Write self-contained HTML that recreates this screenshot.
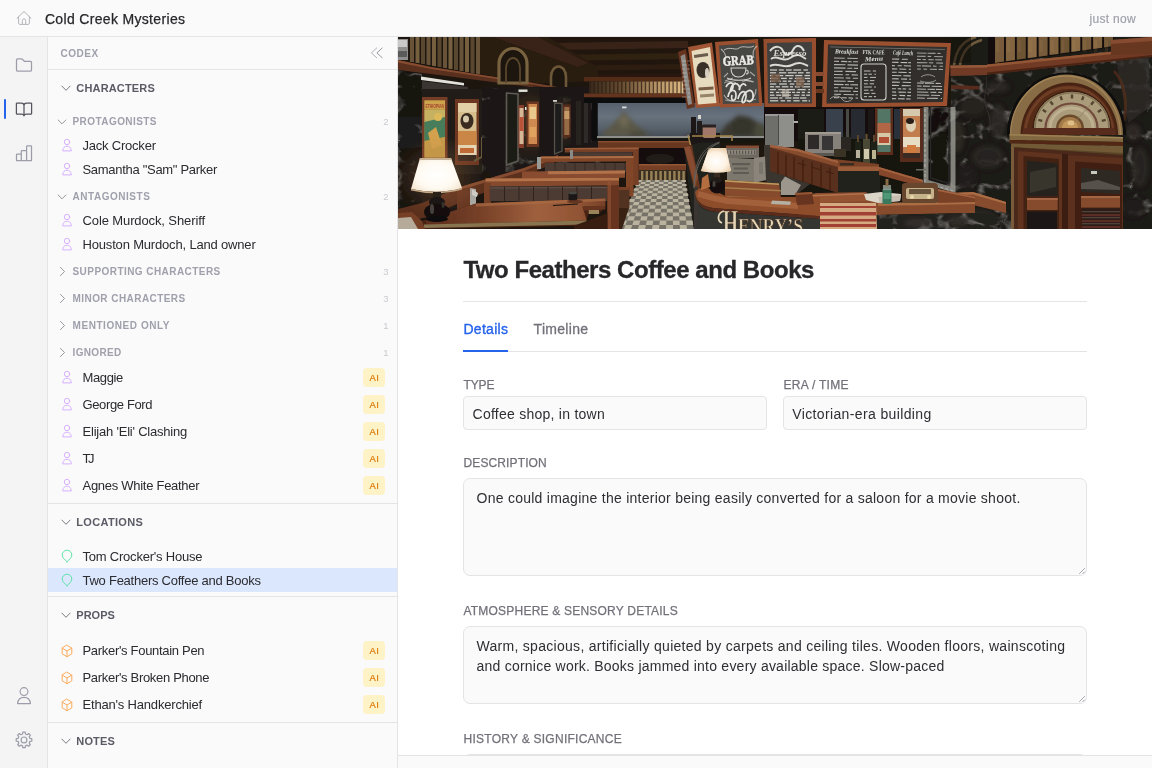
<!DOCTYPE html>
<html lang="en">
<head>
<meta charset="utf-8">
<title>Cold Creek Mysteries</title>
<style>
*{box-sizing:border-box;margin:0;padding:0}
html,body{width:1152px;height:768px;overflow:hidden;background:#fff}
body{font-family:"Liberation Sans",sans-serif;color:#27272a;position:relative}
.abs{position:absolute}
#top{left:0;top:0;width:1152px;height:37px;background:#fafafa;border-bottom:1px solid #e4e4e7}
#rail{left:0;top:37px;width:48px;height:731px;background:#f4f4f5;border-right:1px solid #e4e4e7}
#side{left:48px;top:37px;width:350px;height:731px;background:#fafafa;border-right:1px solid #e4e4e7}
#main{left:398px;top:37px;width:754px;height:718px;background:#fff}
#foot{left:398px;top:755px;width:754px;height:13px;background:#fafafa;border-top:1px solid #e4e4e7}
.t{position:absolute;white-space:nowrap}
#icons{left:0;top:0;pointer-events:none}
#app{position:absolute;left:0;top:0;width:1152px;height:768px;will-change:transform}
</style>
</head>
<body>
<div id="app">
<div id="top" class="abs"></div>
<div class="t" style="left:44.90px;top:12.15px;font-size:14px;line-height:14px;color:#27272a;letter-spacing:0.331px;-webkit-text-stroke:0.25px #27272a;">Cold Creek Mysteries</div>
<div class="t" style="left:1089.61px;top:12.84px;font-size:12px;line-height:12px;color:#a1a1ae;letter-spacing:0.295px;-webkit-text-stroke:0.2px #a1a1ae;">just now</div>
<div id="rail" class="abs"></div>
<div class="abs" style="left:4px;top:99px;width:2px;height:20px;border-radius:1px;background:#2563eb"></div>
<div id="side" class="abs"></div>
<div class="abs" style="left:48px;top:69px;width:349px;height:1px;background:#e4e4e7"></div>
<div class="t" style="left:60.40px;top:48.53px;font-size:10px;line-height:10px;font-weight:700;color:#a0a0ad;letter-spacing:0.534px;">CODEX</div>
<div class="t" style="left:76.30px;top:82.69px;font-size:11px;line-height:11px;font-weight:700;color:#5b5b66;letter-spacing:0.167px;">CHARACTERS</div>
<div class="t" style="left:72.50px;top:116.53px;font-size:10px;line-height:10px;font-weight:700;color:#a0a0ad;letter-spacing:0.432px;">PROTAGONISTS</div>
<div class="t" style="left:383.19px;top:116.76px;font-size:9.5px;line-height:9.5px;color:#c9c9d0;">2</div>
<div class="t" style="left:82.50px;top:139.00px;font-size:13px;line-height:13px;color:#2b2b30;letter-spacing:-0.216px;">Jack Crocker</div>
<div class="t" style="left:82.50px;top:163.00px;font-size:13px;line-height:13px;color:#2b2b30;letter-spacing:-0.297px;">Samantha "Sam" Parker</div>
<div class="t" style="left:72.50px;top:191.53px;font-size:10px;line-height:10px;font-weight:700;color:#a0a0ad;letter-spacing:0.534px;">ANTAGONISTS</div>
<div class="t" style="left:383.19px;top:191.76px;font-size:9.5px;line-height:9.5px;color:#c9c9d0;">2</div>
<div class="t" style="left:82.50px;top:214.00px;font-size:13px;line-height:13px;color:#2b2b30;letter-spacing:-0.111px;">Cole Murdock, Sheriff</div>
<div class="t" style="left:82.50px;top:238.00px;font-size:13px;line-height:13px;color:#2b2b30;letter-spacing:-0.174px;">Houston Murdoch, Land owner</div>
<div class="t" style="left:72.50px;top:266.54px;font-size:10px;line-height:10px;font-weight:700;color:#a0a0ad;letter-spacing:0.441px;">SUPPORTING CHARACTERS</div>
<div class="t" style="left:383.19px;top:266.76px;font-size:9.5px;line-height:9.5px;color:#c9c9d0;">3</div>
<div class="t" style="left:72.50px;top:293.54px;font-size:10px;line-height:10px;font-weight:700;color:#a0a0ad;letter-spacing:0.438px;">MINOR CHARACTERS</div>
<div class="t" style="left:383.19px;top:293.76px;font-size:9.5px;line-height:9.5px;color:#c9c9d0;">3</div>
<div class="t" style="left:72.50px;top:320.54px;font-size:10px;line-height:10px;font-weight:700;color:#a0a0ad;letter-spacing:0.567px;">MENTIONED ONLY</div>
<div class="t" style="left:383.19px;top:320.76px;font-size:9.5px;line-height:9.5px;color:#c9c9d0;">1</div>
<div class="t" style="left:72.50px;top:347.54px;font-size:10px;line-height:10px;font-weight:700;color:#a0a0ad;letter-spacing:0.352px;">IGNORED</div>
<div class="t" style="left:383.19px;top:347.76px;font-size:9.5px;line-height:9.5px;color:#c9c9d0;">1</div>
<div class="t" style="left:82.50px;top:371.00px;font-size:13px;line-height:13px;color:#2b2b30;letter-spacing:-0.365px;">Maggie</div>
<div class="abs" style="left:363px;top:368px;width:22px;height:19px;border-radius:4px;background:#fef3c7"></div>
<div class="t" style="left:369.50px;top:373.06px;font-size:9.5px;line-height:9.5px;color:#d97706;letter-spacing:0.500px;-webkit-text-stroke:0.2px #d97706;">AI</div>
<div class="t" style="left:82.50px;top:398.00px;font-size:13px;line-height:13px;color:#2b2b30;letter-spacing:-0.369px;">George Ford</div>
<div class="abs" style="left:363px;top:395px;width:22px;height:19px;border-radius:4px;background:#fef3c7"></div>
<div class="t" style="left:369.50px;top:400.06px;font-size:9.5px;line-height:9.5px;color:#d97706;letter-spacing:0.500px;-webkit-text-stroke:0.2px #d97706;">AI</div>
<div class="t" style="left:82.50px;top:425.00px;font-size:13px;line-height:13px;color:#2b2b30;letter-spacing:-0.215px;">Elijah 'Eli' Clashing</div>
<div class="abs" style="left:363px;top:422px;width:22px;height:19px;border-radius:4px;background:#fef3c7"></div>
<div class="t" style="left:369.50px;top:427.06px;font-size:9.5px;line-height:9.5px;color:#d97706;letter-spacing:0.500px;-webkit-text-stroke:0.2px #d97706;">AI</div>
<div class="t" style="left:82.50px;top:452.00px;font-size:13px;line-height:13px;color:#2b2b30;letter-spacing:-2.438px;">TJ</div>
<div class="abs" style="left:363px;top:449px;width:22px;height:19px;border-radius:4px;background:#fef3c7"></div>
<div class="t" style="left:369.50px;top:454.06px;font-size:9.5px;line-height:9.5px;color:#d97706;letter-spacing:0.500px;-webkit-text-stroke:0.2px #d97706;">AI</div>
<div class="t" style="left:82.50px;top:479.00px;font-size:13px;line-height:13px;color:#2b2b30;letter-spacing:-0.279px;">Agnes White Feather</div>
<div class="abs" style="left:363px;top:476px;width:22px;height:19px;border-radius:4px;background:#fef3c7"></div>
<div class="t" style="left:369.50px;top:481.06px;font-size:9.5px;line-height:9.5px;color:#d97706;letter-spacing:0.500px;-webkit-text-stroke:0.2px #d97706;">AI</div>
<div class="abs" style="left:48px;top:503px;width:349px;height:1px;background:#e4e4e7"></div>
<div class="t" style="left:76.30px;top:516.69px;font-size:11px;line-height:11px;font-weight:700;color:#5b5b66;letter-spacing:0.320px;">LOCATIONS</div>
<div class="t" style="left:82.50px;top:550.00px;font-size:13px;line-height:13px;color:#2b2b30;letter-spacing:-0.215px;">Tom Crocker's House</div>
<div class="abs" style="left:48px;top:568px;width:349px;height:24px;background:#dbe7fc"></div>
<div class="t" style="left:82.50px;top:574.00px;font-size:13px;line-height:13px;color:#2b2b30;letter-spacing:-0.250px;">Two Feathers Coffee and Books</div>
<div class="abs" style="left:48px;top:596px;width:349px;height:1px;background:#e4e4e7"></div>
<div class="t" style="left:76.30px;top:609.69px;font-size:11px;line-height:11px;font-weight:700;color:#5b5b66;">PROPS</div>
<div class="t" style="left:82.50px;top:644.00px;font-size:13px;line-height:13px;color:#2b2b30;letter-spacing:-0.308px;">Parker's Fountain Pen</div>
<div class="abs" style="left:363px;top:641px;width:22px;height:19px;border-radius:4px;background:#fef3c7"></div>
<div class="t" style="left:369.50px;top:646.06px;font-size:9.5px;line-height:9.5px;color:#d97706;letter-spacing:0.500px;-webkit-text-stroke:0.2px #d97706;">AI</div>
<div class="t" style="left:82.50px;top:671.00px;font-size:13px;line-height:13px;color:#2b2b30;letter-spacing:-0.316px;">Parker's Broken Phone</div>
<div class="abs" style="left:363px;top:668px;width:22px;height:19px;border-radius:4px;background:#fef3c7"></div>
<div class="t" style="left:369.50px;top:673.06px;font-size:9.5px;line-height:9.5px;color:#d97706;letter-spacing:0.500px;-webkit-text-stroke:0.2px #d97706;">AI</div>
<div class="t" style="left:82.50px;top:698.00px;font-size:13px;line-height:13px;color:#2b2b30;letter-spacing:-0.187px;">Ethan's Handkerchief</div>
<div class="abs" style="left:363px;top:695px;width:22px;height:19px;border-radius:4px;background:#fef3c7"></div>
<div class="t" style="left:369.50px;top:700.06px;font-size:9.5px;line-height:9.5px;color:#d97706;letter-spacing:0.500px;-webkit-text-stroke:0.2px #d97706;">AI</div>
<div class="abs" style="left:48px;top:722px;width:349px;height:1px;background:#e4e4e7"></div>
<div class="t" style="left:76.30px;top:735.69px;font-size:11px;line-height:11px;font-weight:700;color:#5b5b66;letter-spacing:0.156px;">NOTES</div>
<div id="main" class="abs"></div>
<svg class="abs" style="left:398px;top:37px" width="754" height="192" viewBox="0 0 754 192" ><defs><filter id="b1" x="-2%" y="-5%" width="104%" height="110%"><feGaussianBlur stdDeviation="0.6"/><feColorMatrix type="saturate" values="0.88"/></filter><filter id="b2" x="-20%" y="-20%" width="140%" height="140%"><feGaussianBlur stdDeviation="2.2"/></filter><filter id="mar" x="0" y="0" width="100%" height="100%"><feTurbulence type="turbulence" baseFrequency="0.03 0.04" numOctaves="3" seed="4" result="n"/><feColorMatrix in="n" type="matrix" values="0 0 0 0 0.37  0 0 0 0 0.355  0 0 0 0 0.33  -4.2 0 0 0 0.8" result="c"/><feComposite in="c" in2="SourceGraphic" operator="in"/></filter><filter id="b3" x="-20%" y="-20%" width="140%" height="140%"><feGaussianBlur stdDeviation="3"/></filter></defs><g filter="url(#b1)"><rect x="0" y="0" width="754" height="192" fill="#1a1511" />
<polygon points="80,0 300,0 300,44 200,44 135,47 82,36" fill="#24160c" />
<polygon points="150,6 290,4 290,11 150,13" fill="#3a2416" />
<polygon points="150,18 290,16 290,22 150,24" fill="#33200f" />
<polygon points="150,29 290,27 290,32 150,34" fill="#2f1d10" />
<polygon points="150,38 290,36 290,40 150,42" fill="#2a190d" />
<polygon points="82,0 150,0 200,30 200,44 135,47 82,37" fill="#2c1a0e" />
<polygon points="95,0 140,0 190,26 180,30" fill="#3b2314" />
<polygon points="10,0 82,0 82,37 10,24" fill="#1e160e" />
<polygon points="12.0,0 16.0,0 16.0,25.36 12.0,24.86" fill="#6a5232" />
<polygon points="17.5,0 21.5,0 21.5,26.35 17.5,25.85" fill="#785e38" />
<polygon points="23.0,0 27.0,0 27.0,27.34 23.0,26.84" fill="#5c472b" />
<polygon points="28.5,0 32.5,0 32.5,28.33 28.5,27.83" fill="#6a5232" />
<polygon points="34.0,0 38.0,0 38.0,29.32 34.0,28.82" fill="#785e38" />
<polygon points="39.5,0 43.5,0 43.5,30.31 39.5,29.81" fill="#5c472b" />
<polygon points="45.0,0 49.0,0 49.0,31.3 45.0,30.8" fill="#6a5232" />
<polygon points="50.5,0 54.5,0 54.5,32.29 50.5,31.79" fill="#785e38" />
<polygon points="56.0,0 60.0,0 60.0,33.28 56.0,32.78" fill="#5c472b" />
<polygon points="61.5,0 65.5,0 65.5,34.269999999999996 61.5,33.769999999999996" fill="#6a5232" />
<polygon points="67.0,0 71.0,0 71.0,35.26 67.0,34.76" fill="#785e38" />
<polygon points="72.5,0 76.5,0 76.5,36.25 72.5,35.75" fill="#5c472b" />
<polygon points="78.0,0 82.0,0 82.0,37.24 78.0,36.74" fill="#6a5232" />
<rect x="0" y="2" width="10" height="21" fill="#8e8e8c" />
<rect x="0" y="3" width="9" height="7" fill="#c9c9c9" />
<rect x="0" y="14" width="9" height="6" fill="#5a5a5a" />
<polygon points="0,23 33,30 135,46 140,51 33,37 0,33" fill="#5c2d17" />
<polygon points="0,23 33,30 135,46 135,47.5 33,32 0,25.5" fill="#8a4a26" />
<polygon points="0,33 24,37 24,172 0,172" fill="#16120e" />
<polygon points="0,80 24,80 24,110 0,112" fill="#1e1d1c" />
<polygon points="0,33 24,37 24,172 0,172" fill="#fff" filter="url(#mar)" opacity="0.7"/>
<polygon points="23,39.5 66,46 66,48.5 23,43" fill="#e2e2da" />
<polygon points="24,44 70,50 70,56 24,52" fill="#3a3630" />
<rect x="24" y="52" width="60" height="85" fill="#241e18" />
<rect x="24" y="60" width="25.5" height="63" fill="#7a3a1c" />
<rect x="26.5" y="63.5" width="20.5" height="57" fill="#a89438" />
<rect x="26.5" y="63.5" width="20.5" height="9" fill="#d3a22e" />
<rect x="26.5" y="73" width="20.5" height="12" fill="#c9b050" />
<polygon points="26.5,85 47,80 47,100 26.5,104" fill="#3f7f58" />
<polygon points="26.5,104 47,100 47,120.5 26.5,120.5" fill="#c99a2c" />
<ellipse cx="40" cy="80" rx="4" ry="4" fill="#e0b83a" />
<text x="36.700" y="70.500" text-anchor="middle" font-family="Liberation Sans,sans-serif" font-weight="700" font-size="4.6" fill="#a8402a" textLength="18.5" lengthAdjust="spacingAndGlyphs">ETHIOPIAN</text>
<polygon points="30,96 38,90 44,108 34,112" fill="#d8a030" />
<rect x="57" y="62" width="24" height="66" fill="#6f3419" />
<rect x="60" y="66" width="18.5" height="58" fill="#d9bd86" />
<rect x="60" y="66" width="18.5" height="9" fill="#e4cf9e" />
<ellipse cx="69" cy="84" rx="6.5" ry="8" fill="#3b2a1e" />
<ellipse cx="68" cy="82" rx="3" ry="3.5" fill="#d8c8a8" />
<rect x="60" y="94" width="18.5" height="14" fill="#cf8432" />
<rect x="60" y="108" width="18.5" height="10" fill="#e6d6b0" />
<rect x="62" y="111" width="14" height="5" fill="#c8661e" />
<rect x="60" y="118" width="18.5" height="6" fill="#3a2a1e" />
<path d="M84 100V120L76 124" fill="none" stroke="#6a5630" stroke-width="2" />
<path d="M101 46V27A14 15.5 0 0 1 129 27V46Z" fill="#1c130c" stroke="#7a6238" stroke-width="3.2" />
<path d="M108 46V31A7 10 0 0 1 122 31V46" fill="none" stroke="#5b4728" stroke-width="1.8" />
<path d="M153 52V40A7.500 10.500 0 0 1 168 40V52Z" fill="#1a120b" stroke="#6e5732" stroke-width="2.6" />
<polygon points="135,46 200,57 290,57 290,62 200,62 135,51" fill="#4a2412" />
<polygon points="135,46 172,52 172,54 135,48" fill="#7a4020" />
<rect x="84" y="50" width="120" height="85" fill="#1d1915" />
<polygon points="84,50 204,62 204,135 84,135" fill="#fff" filter="url(#mar)" opacity="0.6"/>
<radialGradient id="wl"><stop offset="0" stop-color="#6a4424" stop-opacity=".55"/><stop offset="1" stop-color="#6a4424" stop-opacity="0"/></radialGradient>
<ellipse cx="132" cy="86" rx="30" ry="38" fill="url(#wl)" />
<ellipse cx="166" cy="84" rx="16" ry="26" fill="url(#wl)" />
<rect x="92" y="52" width="15.5" height="90" fill="#1a1612" />
<path d="M108.500 56L120 57V124L108.500 128Z" fill="#1d1b18" stroke="#5e5a52" stroke-width="1.6" />
<rect x="120.5" y="52.5" width="9" height="2.4" fill="#e4e4dc" />
<rect x="120.5" y="68" width="5.5" height="43" fill="#8a3a24" />
<rect x="121.5" y="71" width="4" height="36" fill="#d8b890" />
<rect x="121.5" y="80" width="4" height="14" fill="#c0502c" />
<rect x="128.5" y="64.5" width="12.5" height="45.5" fill="#6f3419" />
<rect x="130.5" y="67" width="8.5" height="40" fill="#d4883c" />
<rect x="131.5" y="70" width="6.5" height="12" fill="#ecc880" />
<rect x="131.5" y="90" width="6.5" height="10" fill="#e6a04c" />
<rect x="127" y="70" width="1.5" height="3" fill="#e8e8e0" />
<rect x="141.5" y="52" width="14.5" height="78" fill="#1b1713" />
<path d="M156.500 66L164 66.500V114L156.500 117Z" fill="#1f1d1a" stroke="#56524a" stroke-width="1.3" />
<rect x="165" y="67.5" width="7.5" height="33" fill="#5a2a14" />
<rect x="166.3" y="70" width="5" height="28" fill="#9a6a3c" />
<rect x="166.3" y="74" width="5" height="8" fill="#c89a5c" />
<rect x="155" y="63" width="4" height="1.8" fill="#d0d0c8" />
<rect x="173" y="56" width="20" height="55" fill="#1a1713" />
<rect x="178" y="64" width="5" height="44" fill="#26231f" />
<rect x="186" y="66" width="4" height="40" fill="#2e2b26" />
<rect x="193.5" y="62" width="5.5" height="42" fill="#0c0a08" />
<linearGradient id="slat" x1="0" x2="1"><stop offset="0" stop-color="#3a2818"/><stop offset=".35" stop-color="#6a4c2c"/><stop offset=".7" stop-color="#b8905a"/><stop offset="1" stop-color="#e2b878"/></linearGradient>
<rect x="186" y="40" width="104" height="4.5" fill="#55290f" />
<rect x="191" y="44.5" width="94.5" height="12" fill="url(#slat)" />
<rect x="191.5" y="44.5" width="1.3" height="12" fill="#2a1b0e" opacity=".7"/>
<rect x="195.45" y="44.5" width="1.3" height="12" fill="#2a1b0e" opacity=".7"/>
<rect x="199.4" y="44.5" width="1.3" height="12" fill="#2a1b0e" opacity=".7"/>
<rect x="203.35" y="44.5" width="1.3" height="12" fill="#2a1b0e" opacity=".7"/>
<rect x="207.3" y="44.5" width="1.3" height="12" fill="#2a1b0e" opacity=".7"/>
<rect x="211.25" y="44.5" width="1.3" height="12" fill="#2a1b0e" opacity=".7"/>
<rect x="215.2" y="44.5" width="1.3" height="12" fill="#2a1b0e" opacity=".7"/>
<rect x="219.15" y="44.5" width="1.3" height="12" fill="#2a1b0e" opacity=".7"/>
<rect x="223.1" y="44.5" width="1.3" height="12" fill="#2a1b0e" opacity=".7"/>
<rect x="227.05" y="44.5" width="1.3" height="12" fill="#2a1b0e" opacity=".7"/>
<rect x="231.0" y="44.5" width="1.3" height="12" fill="#2a1b0e" opacity=".7"/>
<rect x="234.95" y="44.5" width="1.3" height="12" fill="#2a1b0e" opacity=".7"/>
<rect x="238.9" y="44.5" width="1.3" height="12" fill="#2a1b0e" opacity=".7"/>
<rect x="242.85" y="44.5" width="1.3" height="12" fill="#2a1b0e" opacity=".7"/>
<rect x="246.8" y="44.5" width="1.3" height="12" fill="#2a1b0e" opacity=".7"/>
<rect x="250.75" y="44.5" width="1.3" height="12" fill="#2a1b0e" opacity=".7"/>
<rect x="254.7" y="44.5" width="1.3" height="12" fill="#2a1b0e" opacity=".7"/>
<rect x="258.65" y="44.5" width="1.3" height="12" fill="#2a1b0e" opacity=".7"/>
<rect x="262.6" y="44.5" width="1.3" height="12" fill="#2a1b0e" opacity=".7"/>
<rect x="266.55" y="44.5" width="1.3" height="12" fill="#2a1b0e" opacity=".7"/>
<rect x="270.5" y="44.5" width="1.3" height="12" fill="#2a1b0e" opacity=".7"/>
<rect x="274.45" y="44.5" width="1.3" height="12" fill="#2a1b0e" opacity=".7"/>
<rect x="278.4" y="44.5" width="1.3" height="12" fill="#2a1b0e" opacity=".7"/>
<rect x="282.35" y="44.5" width="1.3" height="12" fill="#2a1b0e" opacity=".7"/>
<rect x="186" y="56.5" width="104" height="4" fill="#693318" />
<rect x="186" y="60.5" width="106" height="5.5" fill="#100c09" />
<linearGradient id="win" x1="0" y1="0" x2="0" y2="1"><stop offset="0" stop-color="#56616f"/><stop offset=".4" stop-color="#66727f"/><stop offset=".75" stop-color="#56606b"/><stop offset="1" stop-color="#444c55"/></linearGradient>
<rect x="199" y="66" width="167" height="34" fill="url(#win)" />
<g filter="url(#b2)">
<polygon points="226,74 236,86 252,99 202,99 214,88" fill="#5c5845" />
<ellipse cx="226" cy="84" rx="5" ry="6" fill="#6e6850" />
<ellipse cx="240" cy="97" rx="9" ry="4" fill="#4e4b3b" />
<polygon points="340,78 352,80 360,86 366,100 320,100 328,88" fill="#3a392e" />
<ellipse cx="344" cy="90" rx="10" ry="8" fill="#34342b" />
<ellipse cx="362" cy="94" rx="6" ry="8" fill="#4a4838" />
<ellipse cx="300" cy="99" rx="16" ry="3" fill="#444a52" />
</g>
<rect x="224" y="69.5" width="4.5" height="1.8" fill="#dcdcdc" />
<path d="M199 66V100" fill="none" stroke="#0e0c0a" stroke-width="1.5" />
<rect x="199" y="99" width="167" height="2.2" fill="#8e8e8a" />
<rect x="199" y="101.2" width="167" height="4" fill="#181411" />
<polygon points="280,15 288,12 297,70 289,72" fill="#6a3018" />
<polygon points="282.5,19 287,17 294,67 290,68" fill="#8d8a84" />
<polygon points="290,10 314,5.5 322,69 298,71" fill="#a65226" />
<polygon points="293.5,14 312,10 318.5,66 300,67.5" fill="#e7dabb" />
<ellipse cx="305" cy="33" rx="6.5" ry="8" fill="#3a3028" />
<ellipse cx="309" cy="36" rx="2" ry="5" fill="#d8d0c0" />
<rect x="300.5" y="50" width="15" height="3" fill="#7a5a3c" transform="rotate(-4 308 51)"/>
<rect x="302" y="57" width="14" height="3" fill="#9a8262" transform="rotate(-4 308 58)"/>
<rect x="296" y="17" width="14" height="3" fill="#6a5a48" transform="rotate(-8 303 18)"/>
<polygon points="317,5 360,2 364.5,69 322,70.5" fill="#a04e24" />
<polygon points="321,8.5 357,6 361,66 325,67" fill="#474643" />
<polygon points="365.5,2 418,1 418,70 366.5,70" fill="#9c4c23" />
<polygon points="369,6 414,5 414,66.5 370,66.5" fill="#42403c" />
<polygon points="426,3 553,6 549,69 424,70.5" fill="#a04e24" />
<polygon points="430,7.5 549,10 545,65 428.5,66.5" fill="#302f2c" />
<rect x="418" y="35" width="8" height="4" fill="#8a4a26" />
<rect x="418" y="45" width="8" height="4" fill="#8a4a26" />
<rect x="418" y="52" width="8" height="4" fill="#6a3418" />
<line x1="284" y1="24.0" x2="288.0" y2="24.0" stroke="#ecebe4" stroke-width="1.1" opacity="0.35"/>
<line x1="289.3" y1="24.0" x2="292.0" y2="24.0" stroke="#ecebe4" stroke-width="1.1" opacity="0.35"/>
<line x1="284" y1="28.0" x2="288.6" y2="28.0" stroke="#ecebe4" stroke-width="1.1" opacity="0.35"/>
<line x1="290.3" y1="28.0" x2="292.0" y2="28.0" stroke="#ecebe4" stroke-width="1.1" opacity="0.35"/>
<line x1="284" y1="32.0" x2="287.1" y2="32.0" stroke="#ecebe4" stroke-width="1.1" opacity="0.35"/>
<line x1="289.0" y1="32.0" x2="292.0" y2="32.0" stroke="#ecebe4" stroke-width="1.1" opacity="0.35"/>
<line x1="284" y1="36.0" x2="288.3" y2="36.0" stroke="#ecebe4" stroke-width="1.1" opacity="0.35"/>
<line x1="290.9" y1="36.0" x2="292.0" y2="36.0" stroke="#ecebe4" stroke-width="1.1" opacity="0.35"/>
<line x1="284" y1="40.0" x2="288.9" y2="40.0" stroke="#ecebe4" stroke-width="1.1" opacity="0.35"/>
<line x1="284" y1="44.0" x2="288.7" y2="44.0" stroke="#ecebe4" stroke-width="1.1" opacity="0.35"/>
<line x1="290.5" y1="44.0" x2="292.0" y2="44.0" stroke="#ecebe4" stroke-width="1.1" opacity="0.35"/>
<line x1="284" y1="48.0" x2="289.6" y2="48.0" stroke="#ecebe4" stroke-width="1.1" opacity="0.35"/>
<line x1="284" y1="52.0" x2="287.4" y2="52.0" stroke="#ecebe4" stroke-width="1.1" opacity="0.35"/>
<line x1="288.7" y1="52.0" x2="292.0" y2="52.0" stroke="#ecebe4" stroke-width="1.1" opacity="0.35"/>
<line x1="284" y1="56.0" x2="287.5" y2="56.0" stroke="#ecebe4" stroke-width="1.1" opacity="0.35"/>
<line x1="289.7" y1="56.0" x2="292.0" y2="56.0" stroke="#ecebe4" stroke-width="1.1" opacity="0.35"/>
<line x1="284" y1="60.0" x2="288.6" y2="60.0" stroke="#ecebe4" stroke-width="1.1" opacity="0.35"/>
<line x1="289.8" y1="60.0" x2="292.0" y2="60.0" stroke="#ecebe4" stroke-width="1.1" opacity="0.35"/>
<text x="340.5" y="28" text-anchor="middle" font-family="Liberation Serif,serif" font-weight="700" font-size="13.5" fill="#ecebe4" stroke="#ecebe4" stroke-width=".5" transform="rotate(-3 340 28)" textLength="31" lengthAdjust="spacingAndGlyphs">GRAB</text>
<path d="M326 13C332 9 338 14 341 11C345 8 351 12 356 9" fill="none" stroke="#ecebe4" stroke-width="1" opacity=".7"/>
<path d="M333 31h15c0 6-3 9-7.500 9s-7.500-3-7.500-9Z M348 33c3 0 3 4 0 4 M329 41c6 3 18 3 24 0" fill="none" stroke="#ecebe4" stroke-width="1.1" opacity=".85"/>
<path d="M328 50c3-6 8-5 7 0s-4 6-2 1 6-6 8-2-1 5 1 1 5-4 6-1 M330 60c1-8 8-9 8-2s-6 7-4 0 M340 62c2-9 9-10 8-2s-6 7-3 0 9-9 10-3-3 10-6 6" fill="none" stroke="#ecebe4" stroke-width="1.7" opacity=".95"/>
<path d="M323 12c4 3 6 8 4 12 M359 9c-4 3-5 8-3 12 M326 58c2 4 6 6 10 6 M358 52c0 5-2 9-6 12 M327 44l8-3 M346 43l9 2 M330 36l-4 4 M352 35l5 4" fill="none" stroke="#ecebe4" stroke-width="1.1" opacity=".6"/>
<path d="M326 46c4-2 8-2 12 0 M344 45c4-2 8-2 12 0 M327 63c8 2 24 2 31-1" fill="none" stroke="#ecebe4" stroke-width="0.9" opacity=".6"/>
<path d="M372 14c5-6 11-5 13 0s7 5 10-1 8-5 11 1 M373 22c6-5 12 4 19-1s10-3 16 1 M372 29c8-4 14 3 22-1s12-1 16 1" fill="none" stroke="#ecebe4" stroke-width="2.0" opacity=".9"/>
<text x="392" y="19" text-anchor="middle" font-family="Liberation Serif,serif" font-style="italic" font-weight="700" font-size="9" fill="#ecebe4" opacity=".9">Espresso</text>
<line x1="372" y1="33" x2="379.1" y2="33.0" stroke="#ecebe4" stroke-width="1.3" opacity="0.8"/>
<line x1="380.9" y1="33.0" x2="385.8" y2="33.0" stroke="#ecebe4" stroke-width="1.3" opacity="0.8"/>
<line x1="388.0" y1="33.0" x2="393.7" y2="33.0" stroke="#ecebe4" stroke-width="1.3" opacity="0.8"/>
<line x1="395.3" y1="33.0" x2="403.1" y2="33.0" stroke="#ecebe4" stroke-width="1.3" opacity="0.8"/>
<line x1="405.5" y1="33.0" x2="409.9" y2="33.0" stroke="#ecebe4" stroke-width="1.3" opacity="0.8"/>
<line x1="372" y1="35.8" x2="378.2" y2="35.8" stroke="#ecebe4" stroke-width="1.3" opacity="0.8"/>
<line x1="380.9" y1="35.8" x2="388.3" y2="35.8" stroke="#ecebe4" stroke-width="1.3" opacity="0.8"/>
<line x1="389.9" y1="35.8" x2="398.7" y2="35.8" stroke="#ecebe4" stroke-width="1.3" opacity="0.8"/>
<line x1="400.0" y1="35.8" x2="405.5" y2="35.8" stroke="#ecebe4" stroke-width="1.3" opacity="0.8"/>
<line x1="408.0" y1="35.8" x2="411.9" y2="35.8" stroke="#ecebe4" stroke-width="1.3" opacity="0.8"/>
<line x1="372" y1="38.6" x2="375.2" y2="38.6" stroke="#ecebe4" stroke-width="1.3" opacity="0.8"/>
<line x1="377.6" y1="38.6" x2="385.2" y2="38.6" stroke="#ecebe4" stroke-width="1.3" opacity="0.8"/>
<line x1="387.3" y1="38.6" x2="395.6" y2="38.6" stroke="#ecebe4" stroke-width="1.3" opacity="0.8"/>
<line x1="397.2" y1="38.6" x2="404.4" y2="38.6" stroke="#ecebe4" stroke-width="1.3" opacity="0.8"/>
<line x1="406.5" y1="38.6" x2="412.0" y2="38.6" stroke="#ecebe4" stroke-width="1.3" opacity="0.8"/>
<line x1="372" y1="41.4" x2="380.0" y2="41.4" stroke="#ecebe4" stroke-width="1.3" opacity="0.8"/>
<line x1="382.9" y1="41.4" x2="388.8" y2="41.4" stroke="#ecebe4" stroke-width="1.3" opacity="0.8"/>
<line x1="391.1" y1="41.4" x2="394.5" y2="41.4" stroke="#ecebe4" stroke-width="1.3" opacity="0.8"/>
<line x1="396.9" y1="41.4" x2="403.8" y2="41.4" stroke="#ecebe4" stroke-width="1.3" opacity="0.8"/>
<line x1="406.7" y1="41.4" x2="412.0" y2="41.4" stroke="#ecebe4" stroke-width="1.3" opacity="0.8"/>
<line x1="372" y1="44.2" x2="377.3" y2="44.2" stroke="#ecebe4" stroke-width="1.3" opacity="0.8"/>
<line x1="379.7" y1="44.2" x2="382.8" y2="44.2" stroke="#ecebe4" stroke-width="1.3" opacity="0.8"/>
<line x1="384.7" y1="44.2" x2="388.7" y2="44.2" stroke="#ecebe4" stroke-width="1.3" opacity="0.8"/>
<line x1="390.0" y1="44.2" x2="393.3" y2="44.2" stroke="#ecebe4" stroke-width="1.3" opacity="0.8"/>
<line x1="395.8" y1="44.2" x2="399.6" y2="44.2" stroke="#ecebe4" stroke-width="1.3" opacity="0.8"/>
<line x1="401.1" y1="44.2" x2="406.5" y2="44.2" stroke="#ecebe4" stroke-width="1.3" opacity="0.8"/>
<line x1="409.2" y1="44.2" x2="412.0" y2="44.2" stroke="#ecebe4" stroke-width="1.3" opacity="0.8"/>
<line x1="372" y1="47.0" x2="378.3" y2="47.0" stroke="#ecebe4" stroke-width="1.3" opacity="0.8"/>
<line x1="381.1" y1="47.0" x2="389.0" y2="47.0" stroke="#ecebe4" stroke-width="1.3" opacity="0.8"/>
<line x1="391.7" y1="47.0" x2="396.4" y2="47.0" stroke="#ecebe4" stroke-width="1.3" opacity="0.8"/>
<line x1="398.2" y1="47.0" x2="403.4" y2="47.0" stroke="#ecebe4" stroke-width="1.3" opacity="0.8"/>
<line x1="406.1" y1="47.0" x2="412.0" y2="47.0" stroke="#ecebe4" stroke-width="1.3" opacity="0.8"/>
<line x1="372" y1="49.8" x2="376.1" y2="49.8" stroke="#ecebe4" stroke-width="1.3" opacity="0.8"/>
<line x1="377.5" y1="49.8" x2="381.9" y2="49.8" stroke="#ecebe4" stroke-width="1.3" opacity="0.8"/>
<line x1="383.9" y1="49.8" x2="390.4" y2="49.8" stroke="#ecebe4" stroke-width="1.3" opacity="0.8"/>
<line x1="392.0" y1="49.8" x2="395.0" y2="49.8" stroke="#ecebe4" stroke-width="1.3" opacity="0.8"/>
<line x1="396.8" y1="49.8" x2="402.0" y2="49.8" stroke="#ecebe4" stroke-width="1.3" opacity="0.8"/>
<line x1="404.2" y1="49.8" x2="412.0" y2="49.8" stroke="#ecebe4" stroke-width="1.3" opacity="0.8"/>
<line x1="372" y1="52.6" x2="378.1" y2="52.6" stroke="#ecebe4" stroke-width="1.3" opacity="0.8"/>
<line x1="380.3" y1="52.6" x2="387.4" y2="52.6" stroke="#ecebe4" stroke-width="1.3" opacity="0.8"/>
<line x1="388.5" y1="52.6" x2="396.9" y2="52.6" stroke="#ecebe4" stroke-width="1.3" opacity="0.8"/>
<line x1="399.5" y1="52.6" x2="407.7" y2="52.6" stroke="#ecebe4" stroke-width="1.3" opacity="0.8"/>
<line x1="410.3" y1="52.6" x2="412.0" y2="52.6" stroke="#ecebe4" stroke-width="1.3" opacity="0.8"/>
<line x1="372" y1="55.4" x2="375.6" y2="55.4" stroke="#ecebe4" stroke-width="1.3" opacity="0.8"/>
<line x1="377.9" y1="55.4" x2="381.3" y2="55.4" stroke="#ecebe4" stroke-width="1.3" opacity="0.8"/>
<line x1="382.4" y1="55.4" x2="386.7" y2="55.4" stroke="#ecebe4" stroke-width="1.3" opacity="0.8"/>
<line x1="388.0" y1="55.4" x2="393.0" y2="55.4" stroke="#ecebe4" stroke-width="1.3" opacity="0.8"/>
<line x1="394.1" y1="55.4" x2="397.1" y2="55.4" stroke="#ecebe4" stroke-width="1.3" opacity="0.8"/>
<line x1="398.4" y1="55.4" x2="402.0" y2="55.4" stroke="#ecebe4" stroke-width="1.3" opacity="0.8"/>
<line x1="403.8" y1="55.4" x2="406.9" y2="55.4" stroke="#ecebe4" stroke-width="1.3" opacity="0.8"/>
<line x1="409.7" y1="55.4" x2="412.0" y2="55.4" stroke="#ecebe4" stroke-width="1.3" opacity="0.8"/>
<line x1="372" y1="58.2" x2="376.5" y2="58.2" stroke="#ecebe4" stroke-width="1.3" opacity="0.8"/>
<line x1="378.2" y1="58.2" x2="383.4" y2="58.2" stroke="#ecebe4" stroke-width="1.3" opacity="0.8"/>
<line x1="384.6" y1="58.2" x2="392.7" y2="58.2" stroke="#ecebe4" stroke-width="1.3" opacity="0.8"/>
<line x1="395.7" y1="58.2" x2="401.5" y2="58.2" stroke="#ecebe4" stroke-width="1.3" opacity="0.8"/>
<line x1="403.5" y1="58.2" x2="407.0" y2="58.2" stroke="#ecebe4" stroke-width="1.3" opacity="0.8"/>
<line x1="408.2" y1="58.2" x2="412.0" y2="58.2" stroke="#ecebe4" stroke-width="1.3" opacity="0.8"/>
<line x1="372" y1="61.0" x2="380.0" y2="61.0" stroke="#ecebe4" stroke-width="1.3" opacity="0.8"/>
<line x1="381.3" y1="61.0" x2="384.4" y2="61.0" stroke="#ecebe4" stroke-width="1.3" opacity="0.8"/>
<line x1="387.3" y1="61.0" x2="393.5" y2="61.0" stroke="#ecebe4" stroke-width="1.3" opacity="0.8"/>
<line x1="394.8" y1="61.0" x2="401.1" y2="61.0" stroke="#ecebe4" stroke-width="1.3" opacity="0.8"/>
<line x1="402.1" y1="61.0" x2="408.3" y2="61.0" stroke="#ecebe4" stroke-width="1.3" opacity="0.8"/>
<line x1="372" y1="63.8" x2="380.2" y2="63.8" stroke="#ecebe4" stroke-width="1.3" opacity="0.8"/>
<line x1="382.6" y1="63.8" x2="387.1" y2="63.8" stroke="#ecebe4" stroke-width="1.3" opacity="0.8"/>
<line x1="388.9" y1="63.8" x2="392.9" y2="63.8" stroke="#ecebe4" stroke-width="1.3" opacity="0.8"/>
<line x1="395.4" y1="63.8" x2="401.6" y2="63.8" stroke="#ecebe4" stroke-width="1.3" opacity="0.8"/>
<line x1="404.2" y1="63.8" x2="409.2" y2="63.8" stroke="#ecebe4" stroke-width="1.3" opacity="0.8"/>
<line x1="410.6" y1="63.8" x2="412.0" y2="63.8" stroke="#ecebe4" stroke-width="1.3" opacity="0.8"/>
<rect x="373" y="37" width="9" height="8" fill="#7a5a44" opacity=".8"/>
<rect x="398" y="40" width="8" height="10" fill="#8a6a50" opacity=".7"/>
<rect x="384" y="52" width="7" height="8" fill="#c8c0b0" opacity=".6"/>
<g font-family="Liberation Serif,serif" fill="#ecebe4" font-weight="700" opacity=".92"><text x="437" y="16.500" font-size="6.500" font-style="italic" transform="rotate(1.3 438 16)" textLength="23" lengthAdjust="spacingAndGlyphs">Breakfast</text><text x="464.500" y="17" font-size="6" transform="rotate(1.3 464 17)" textLength="22" lengthAdjust="spacingAndGlyphs">FTK CAFÉ</text><text x="495" y="17.800" font-size="6.500" font-style="italic" transform="rotate(1.3 495 17)" textLength="20" lengthAdjust="spacingAndGlyphs">Café Lunch</text><text x="467" y="24.500" font-size="6.500" font-style="italic" transform="rotate(-3 466 24)" textLength="18" lengthAdjust="spacingAndGlyphs">Menu</text></g>
<line x1="436" y1="21.0" x2="446.7" y2="21.2" stroke="#ecebe4" stroke-width="1.1" opacity="0.7"/>
<line x1="449.3" y1="21.3" x2="459.7" y2="21.5" stroke="#ecebe4" stroke-width="1.1" opacity="0.7"/>
<line x1="436" y1="24.3" x2="441.0" y2="24.4" stroke="#ecebe4" stroke-width="1.1" opacity="0.7"/>
<line x1="443.1" y1="24.4" x2="449.3" y2="24.6" stroke="#ecebe4" stroke-width="1.1" opacity="0.7"/>
<line x1="450.3" y1="24.6" x2="453.6" y2="24.7" stroke="#ecebe4" stroke-width="1.1" opacity="0.7"/>
<line x1="455.1" y1="24.7" x2="460.0" y2="24.8" stroke="#ecebe4" stroke-width="1.1" opacity="0.7"/>
<line x1="436" y1="27.6" x2="447.6" y2="27.8" stroke="#ecebe4" stroke-width="1.1" opacity="0.7"/>
<line x1="449.5" y1="27.9" x2="460.0" y2="28.1" stroke="#ecebe4" stroke-width="1.1" opacity="0.7"/>
<line x1="436" y1="30.9" x2="447.6" y2="31.1" stroke="#ecebe4" stroke-width="1.1" opacity="0.7"/>
<line x1="449.3" y1="31.2" x2="454.3" y2="31.3" stroke="#ecebe4" stroke-width="1.1" opacity="0.7"/>
<line x1="455.8" y1="31.3" x2="460.0" y2="31.4" stroke="#ecebe4" stroke-width="1.1" opacity="0.7"/>
<line x1="436" y1="34.2" x2="444.6" y2="34.4" stroke="#ecebe4" stroke-width="1.1" opacity="0.7"/>
<line x1="447.4" y1="34.4" x2="458.0" y2="34.6" stroke="#ecebe4" stroke-width="1.1" opacity="0.7"/>
<line x1="436" y1="37.5" x2="444.9" y2="37.7" stroke="#ecebe4" stroke-width="1.1" opacity="0.7"/>
<line x1="447.5" y1="37.7" x2="451.2" y2="37.8" stroke="#ecebe4" stroke-width="1.1" opacity="0.7"/>
<line x1="453.6" y1="37.9" x2="460.0" y2="38.0" stroke="#ecebe4" stroke-width="1.1" opacity="0.7"/>
<line x1="436" y1="40.8" x2="445.8" y2="41.0" stroke="#ecebe4" stroke-width="1.1" opacity="0.7"/>
<line x1="447.7" y1="41.0" x2="452.3" y2="41.1" stroke="#ecebe4" stroke-width="1.1" opacity="0.7"/>
<line x1="454.9" y1="41.2" x2="460.0" y2="41.3" stroke="#ecebe4" stroke-width="1.1" opacity="0.7"/>
<line x1="436" y1="44.1" x2="447.7" y2="44.3" stroke="#ecebe4" stroke-width="1.1" opacity="0.7"/>
<line x1="449.5" y1="44.4" x2="456.1" y2="44.5" stroke="#ecebe4" stroke-width="1.1" opacity="0.7"/>
<line x1="436" y1="47.4" x2="445.5" y2="47.6" stroke="#ecebe4" stroke-width="1.1" opacity="0.7"/>
<line x1="446.9" y1="47.6" x2="451.0" y2="47.7" stroke="#ecebe4" stroke-width="1.1" opacity="0.7"/>
<line x1="452.3" y1="47.7" x2="460.0" y2="47.9" stroke="#ecebe4" stroke-width="1.1" opacity="0.7"/>
<line x1="436" y1="50.7" x2="440.3" y2="50.8" stroke="#ecebe4" stroke-width="1.1" opacity="0.7"/>
<line x1="443.0" y1="50.8" x2="454.8" y2="51.1" stroke="#ecebe4" stroke-width="1.1" opacity="0.7"/>
<line x1="457.1" y1="51.1" x2="460.0" y2="51.2" stroke="#ecebe4" stroke-width="1.1" opacity="0.7"/>
<line x1="436" y1="54.0" x2="440.2" y2="54.1" stroke="#ecebe4" stroke-width="1.1" opacity="0.7"/>
<line x1="441.2" y1="54.1" x2="452.9" y2="54.3" stroke="#ecebe4" stroke-width="1.1" opacity="0.7"/>
<line x1="455.2" y1="54.4" x2="460.0" y2="54.5" stroke="#ecebe4" stroke-width="1.1" opacity="0.7"/>
<line x1="436" y1="57.3" x2="442.9" y2="57.4" stroke="#ecebe4" stroke-width="1.1" opacity="0.7"/>
<line x1="445.6" y1="57.5" x2="456.1" y2="57.7" stroke="#ecebe4" stroke-width="1.1" opacity="0.7"/>
<line x1="457.5" y1="57.7" x2="460.0" y2="57.8" stroke="#ecebe4" stroke-width="1.1" opacity="0.7"/>
<line x1="436" y1="60.6" x2="441.2" y2="60.7" stroke="#ecebe4" stroke-width="1.1" opacity="0.7"/>
<line x1="443.3" y1="60.7" x2="448.7" y2="60.9" stroke="#ecebe4" stroke-width="1.1" opacity="0.7"/>
<line x1="450.5" y1="60.9" x2="454.7" y2="61.0" stroke="#ecebe4" stroke-width="1.1" opacity="0.7"/>
<line x1="457.5" y1="61.0" x2="460.0" y2="61.1" stroke="#ecebe4" stroke-width="1.1" opacity="0.7"/>
<line x1="494" y1="22.0" x2="501.1" y2="22.1" stroke="#ecebe4" stroke-width="1.1" opacity="0.75"/>
<line x1="503.9" y1="22.2" x2="509.8" y2="22.3" stroke="#ecebe4" stroke-width="1.1" opacity="0.75"/>
<line x1="494" y1="25.3" x2="500.5" y2="25.4" stroke="#ecebe4" stroke-width="1.1" opacity="0.75"/>
<line x1="502.6" y1="25.5" x2="509.2" y2="25.6" stroke="#ecebe4" stroke-width="1.1" opacity="0.75"/>
<line x1="510.3" y1="25.6" x2="513.0" y2="25.7" stroke="#ecebe4" stroke-width="1.1" opacity="0.75"/>
<line x1="494" y1="28.6" x2="497.0" y2="28.7" stroke="#ecebe4" stroke-width="1.1" opacity="0.75"/>
<line x1="499.6" y1="28.7" x2="503.8" y2="28.8" stroke="#ecebe4" stroke-width="1.1" opacity="0.75"/>
<line x1="505.8" y1="28.8" x2="513.0" y2="29.0" stroke="#ecebe4" stroke-width="1.1" opacity="0.75"/>
<line x1="494" y1="31.9" x2="499.3" y2="32.0" stroke="#ecebe4" stroke-width="1.1" opacity="0.75"/>
<line x1="501.3" y1="32.0" x2="508.2" y2="32.2" stroke="#ecebe4" stroke-width="1.1" opacity="0.75"/>
<line x1="510.8" y1="32.2" x2="513.0" y2="32.3" stroke="#ecebe4" stroke-width="1.1" opacity="0.75"/>
<line x1="494" y1="35.2" x2="498.7" y2="35.3" stroke="#ecebe4" stroke-width="1.1" opacity="0.75"/>
<line x1="500.3" y1="35.3" x2="508.7" y2="35.5" stroke="#ecebe4" stroke-width="1.1" opacity="0.75"/>
<line x1="510.7" y1="35.5" x2="513.0" y2="35.6" stroke="#ecebe4" stroke-width="1.1" opacity="0.75"/>
<line x1="494" y1="38.5" x2="503.4" y2="38.7" stroke="#ecebe4" stroke-width="1.1" opacity="0.75"/>
<line x1="505.3" y1="38.7" x2="512.6" y2="38.9" stroke="#ecebe4" stroke-width="1.1" opacity="0.75"/>
<line x1="494" y1="41.8" x2="500.6" y2="41.9" stroke="#ecebe4" stroke-width="1.1" opacity="0.75"/>
<line x1="503.0" y1="42.0" x2="509.1" y2="42.1" stroke="#ecebe4" stroke-width="1.1" opacity="0.75"/>
<line x1="511.2" y1="42.1" x2="513.0" y2="42.2" stroke="#ecebe4" stroke-width="1.1" opacity="0.75"/>
<line x1="494" y1="45.1" x2="501.9" y2="45.3" stroke="#ecebe4" stroke-width="1.1" opacity="0.75"/>
<line x1="504.6" y1="45.3" x2="513.0" y2="45.5" stroke="#ecebe4" stroke-width="1.1" opacity="0.75"/>
<line x1="494" y1="48.4" x2="500.9" y2="48.5" stroke="#ecebe4" stroke-width="1.1" opacity="0.75"/>
<line x1="503.8" y1="48.6" x2="512.7" y2="48.8" stroke="#ecebe4" stroke-width="1.1" opacity="0.75"/>
<line x1="494" y1="51.7" x2="497.9" y2="51.8" stroke="#ecebe4" stroke-width="1.1" opacity="0.75"/>
<line x1="499.7" y1="51.8" x2="503.2" y2="51.9" stroke="#ecebe4" stroke-width="1.1" opacity="0.75"/>
<line x1="504.7" y1="51.9" x2="508.2" y2="52.0" stroke="#ecebe4" stroke-width="1.1" opacity="0.75"/>
<line x1="510.6" y1="52.0" x2="513.0" y2="52.1" stroke="#ecebe4" stroke-width="1.1" opacity="0.75"/>
<line x1="494" y1="55.0" x2="498.1" y2="55.1" stroke="#ecebe4" stroke-width="1.1" opacity="0.75"/>
<line x1="500.5" y1="55.1" x2="508.1" y2="55.3" stroke="#ecebe4" stroke-width="1.1" opacity="0.75"/>
<line x1="509.4" y1="55.3" x2="513.0" y2="55.4" stroke="#ecebe4" stroke-width="1.1" opacity="0.75"/>
<line x1="494" y1="58.3" x2="498.5" y2="58.4" stroke="#ecebe4" stroke-width="1.1" opacity="0.75"/>
<line x1="501.4" y1="58.4" x2="507.2" y2="58.6" stroke="#ecebe4" stroke-width="1.1" opacity="0.75"/>
<line x1="509.2" y1="58.6" x2="513.0" y2="58.7" stroke="#ecebe4" stroke-width="1.1" opacity="0.75"/>
<line x1="494" y1="61.6" x2="498.1" y2="61.7" stroke="#ecebe4" stroke-width="1.1" opacity="0.75"/>
<line x1="500.0" y1="61.7" x2="506.6" y2="61.9" stroke="#ecebe4" stroke-width="1.1" opacity="0.75"/>
<line x1="508.3" y1="61.9" x2="512.7" y2="62.0" stroke="#ecebe4" stroke-width="1.1" opacity="0.75"/>
<line x1="519" y1="16.0" x2="528.5" y2="16.2" stroke="#ecebe4" stroke-width="1.1" opacity="0.6"/>
<line x1="529.5" y1="16.2" x2="537.5" y2="16.4" stroke="#ecebe4" stroke-width="1.1" opacity="0.6"/>
<line x1="539.4" y1="16.4" x2="542.6" y2="16.5" stroke="#ecebe4" stroke-width="1.1" opacity="0.6"/>
<line x1="519" y1="19.2" x2="527.6" y2="19.4" stroke="#ecebe4" stroke-width="1.1" opacity="0.6"/>
<line x1="529.6" y1="19.4" x2="533.2" y2="19.5" stroke="#ecebe4" stroke-width="1.1" opacity="0.6"/>
<line x1="536.2" y1="19.5" x2="545.0" y2="19.7" stroke="#ecebe4" stroke-width="1.1" opacity="0.6"/>
<line x1="519" y1="22.4" x2="522.9" y2="22.5" stroke="#ecebe4" stroke-width="1.1" opacity="0.6"/>
<line x1="524.5" y1="22.5" x2="527.8" y2="22.6" stroke="#ecebe4" stroke-width="1.1" opacity="0.6"/>
<line x1="530.4" y1="22.6" x2="535.8" y2="22.7" stroke="#ecebe4" stroke-width="1.1" opacity="0.6"/>
<line x1="537.1" y1="22.8" x2="543.9" y2="22.9" stroke="#ecebe4" stroke-width="1.1" opacity="0.6"/>
<line x1="519" y1="25.6" x2="529.4" y2="25.8" stroke="#ecebe4" stroke-width="1.1" opacity="0.6"/>
<line x1="530.9" y1="25.8" x2="535.2" y2="25.9" stroke="#ecebe4" stroke-width="1.1" opacity="0.6"/>
<line x1="538.1" y1="26.0" x2="545.0" y2="26.1" stroke="#ecebe4" stroke-width="1.1" opacity="0.6"/>
<line x1="519" y1="28.8" x2="522.8" y2="28.9" stroke="#ecebe4" stroke-width="1.1" opacity="0.6"/>
<line x1="523.9" y1="28.9" x2="533.1" y2="29.1" stroke="#ecebe4" stroke-width="1.1" opacity="0.6"/>
<line x1="535.0" y1="29.1" x2="538.6" y2="29.2" stroke="#ecebe4" stroke-width="1.1" opacity="0.6"/>
<line x1="541.5" y1="29.2" x2="545.0" y2="29.3" stroke="#ecebe4" stroke-width="1.1" opacity="0.6"/>
<line x1="519" y1="32.0" x2="522.8" y2="32.1" stroke="#ecebe4" stroke-width="1.1" opacity="0.6"/>
<line x1="525.5" y1="32.1" x2="529.1" y2="32.2" stroke="#ecebe4" stroke-width="1.1" opacity="0.6"/>
<line x1="531.8" y1="32.3" x2="538.9" y2="32.4" stroke="#ecebe4" stroke-width="1.1" opacity="0.6"/>
<line x1="540.6" y1="32.4" x2="545.0" y2="32.5" stroke="#ecebe4" stroke-width="1.1" opacity="0.6"/>
<line x1="519" y1="46.0" x2="525.7" y2="46.1" stroke="#ecebe4" stroke-width="1.1" opacity="0.7"/>
<line x1="526.9" y1="46.2" x2="536.2" y2="46.3" stroke="#ecebe4" stroke-width="1.1" opacity="0.7"/>
<line x1="537.7" y1="46.4" x2="542.8" y2="46.5" stroke="#ecebe4" stroke-width="1.1" opacity="0.7"/>
<line x1="519" y1="49.0" x2="523.5" y2="49.1" stroke="#ecebe4" stroke-width="1.1" opacity="0.7"/>
<line x1="524.9" y1="49.1" x2="532.0" y2="49.3" stroke="#ecebe4" stroke-width="1.1" opacity="0.7"/>
<line x1="533.6" y1="49.3" x2="544.0" y2="49.5" stroke="#ecebe4" stroke-width="1.1" opacity="0.7"/>
<line x1="519" y1="52.0" x2="528.0" y2="52.2" stroke="#ecebe4" stroke-width="1.1" opacity="0.7"/>
<line x1="529.4" y1="52.2" x2="536.8" y2="52.4" stroke="#ecebe4" stroke-width="1.1" opacity="0.7"/>
<line x1="537.9" y1="52.4" x2="544.0" y2="52.5" stroke="#ecebe4" stroke-width="1.1" opacity="0.7"/>
<line x1="519" y1="55.0" x2="530.3" y2="55.2" stroke="#ecebe4" stroke-width="1.1" opacity="0.7"/>
<line x1="532.4" y1="55.3" x2="538.3" y2="55.4" stroke="#ecebe4" stroke-width="1.1" opacity="0.7"/>
<line x1="540.3" y1="55.4" x2="544.0" y2="55.5" stroke="#ecebe4" stroke-width="1.1" opacity="0.7"/>
<line x1="519" y1="58.0" x2="531.2" y2="58.2" stroke="#ecebe4" stroke-width="1.1" opacity="0.7"/>
<line x1="533.1" y1="58.3" x2="542.0" y2="58.5" stroke="#ecebe4" stroke-width="1.1" opacity="0.7"/>
<line x1="519" y1="61.0" x2="526.9" y2="61.2" stroke="#ecebe4" stroke-width="1.1" opacity="0.7"/>
<line x1="528.9" y1="61.2" x2="539.8" y2="61.4" stroke="#ecebe4" stroke-width="1.1" opacity="0.7"/>
<line x1="542.8" y1="61.5" x2="544.0" y2="61.5" stroke="#ecebe4" stroke-width="1.1" opacity="0.7"/>
<path d="M463 30q0-3 3-3h19q3 0 3 3v30q0 3-3 3h-19q-3 0-3-3Z" fill="none" stroke="#ecebe4" stroke-width="1.1" opacity=".85"/>
<line x1="466" y1="34.0" x2="472.5" y2="34.0" stroke="#ecebe4" stroke-width="1.1" opacity="0.7"/>
<line x1="474.8" y1="34.0" x2="478.0" y2="34.0" stroke="#ecebe4" stroke-width="1.1" opacity="0.7"/>
<line x1="466" y1="37.2" x2="469.3" y2="37.2" stroke="#ecebe4" stroke-width="1.1" opacity="0.7"/>
<line x1="470.5" y1="37.2" x2="473.9" y2="37.2" stroke="#ecebe4" stroke-width="1.1" opacity="0.7"/>
<line x1="476.4" y1="37.2" x2="478.0" y2="37.2" stroke="#ecebe4" stroke-width="1.1" opacity="0.7"/>
<line x1="466" y1="40.4" x2="469.4" y2="40.4" stroke="#ecebe4" stroke-width="1.1" opacity="0.7"/>
<line x1="472.1" y1="40.4" x2="478.0" y2="40.4" stroke="#ecebe4" stroke-width="1.1" opacity="0.7"/>
<line x1="466" y1="43.6" x2="470.4" y2="43.6" stroke="#ecebe4" stroke-width="1.1" opacity="0.7"/>
<line x1="471.9" y1="43.6" x2="476.4" y2="43.6" stroke="#ecebe4" stroke-width="1.1" opacity="0.7"/>
<line x1="466" y1="46.8" x2="469.8" y2="46.8" stroke="#ecebe4" stroke-width="1.1" opacity="0.7"/>
<line x1="471.7" y1="46.8" x2="476.0" y2="46.8" stroke="#ecebe4" stroke-width="1.1" opacity="0.7"/>
<line x1="466" y1="50.0" x2="473.9" y2="50.0" stroke="#ecebe4" stroke-width="1.1" opacity="0.7"/>
<line x1="476.0" y1="50.0" x2="478.0" y2="50.0" stroke="#ecebe4" stroke-width="1.1" opacity="0.7"/>
<line x1="466" y1="53.2" x2="470.5" y2="53.2" stroke="#ecebe4" stroke-width="1.1" opacity="0.7"/>
<line x1="472.3" y1="53.2" x2="475.3" y2="53.2" stroke="#ecebe4" stroke-width="1.1" opacity="0.7"/>
<line x1="466" y1="56.4" x2="471.4" y2="56.4" stroke="#ecebe4" stroke-width="1.1" opacity="0.7"/>
<line x1="473.4" y1="56.4" x2="477.4" y2="56.4" stroke="#ecebe4" stroke-width="1.1" opacity="0.7"/>
<line x1="466" y1="59.6" x2="469.0" y2="59.6" stroke="#ecebe4" stroke-width="1.1" opacity="0.7"/>
<line x1="470.6" y1="59.6" x2="474.0" y2="59.6" stroke="#ecebe4" stroke-width="1.1" opacity="0.7"/>
<line x1="475.8" y1="59.6" x2="478.0" y2="59.6" stroke="#ecebe4" stroke-width="1.1" opacity="0.7"/>
<path d="M432 62c4-4 9-4 12 0s8 3 11-1 M523 40c4-3 10-3 14 0 M522 44c6 2 12 2 16-1" fill="none" stroke="#ecebe4" stroke-width="1" opacity=".55"/>
<rect x="432" y="9.5" width="115" height="0.8" fill="#ecebe4" opacity=".4" transform="rotate(1.2 432 9)"/>
<rect x="366" y="70" width="234" height="34" fill="#14110e" />
<rect x="400" y="96" width="153" height="96" fill="#15120f" />
<rect x="367" y="77" width="29" height="33" fill="#6e6e6a" />
<rect x="380" y="77" width="16" height="33" fill="#8e8e8a" />
<rect x="367" y="77" width="29" height="2" fill="#9a9a98" />
<rect x="380" y="78" width="1" height="30" fill="#4a4a48" />
<rect x="395" y="84" width="6" height="2" fill="#aaa" />
<rect x="400" y="72" width="26" height="30" fill="#1d1b19" />
<rect x="428" y="72" width="17" height="30" fill="#38434e" />
<rect x="448" y="72" width="3" height="30" fill="#4a4a44" />
<rect x="453" y="72" width="14" height="30" fill="#262c33" />
<rect x="470" y="72" width="6" height="30" fill="#1a1714" />
<rect x="477" y="71" width="18" height="47" fill="#5e2c14" />
<rect x="479.5" y="72" width="13" height="43" fill="#4d7664" />
<rect x="479.5" y="86" width="13" height="10" fill="#b8643a" />
<rect x="479.5" y="96" width="13" height="12" fill="#d8c8a0" />
<rect x="481" y="100" width="10" height="6" fill="#b84a28" />
<rect x="496" y="72" width="6" height="30" fill="#2a323a" />
<rect x="502" y="71" width="23" height="54" fill="#5a2a14" />
<rect x="505" y="72" width="17" height="49" fill="#c77a3c" />
<rect x="505" y="72" width="17" height="7" fill="#d8c8a8" />
<ellipse cx="513" cy="88" rx="5" ry="7" fill="#e0d0b0" />
<ellipse cx="512" cy="84" rx="4" ry="3" fill="#2a1a14" />
<rect x="505" y="100" width="17" height="10" fill="#e8dcc0" />
<rect x="509" y="108" width="9" height="8" fill="#d87820" />
<rect x="505" y="116" width="17" height="5" fill="#3a2a20" />
<rect x="528" y="72" width="4" height="80" fill="#0d0b09" />
<polygon points="526,70 600,70 600,160 526,150" fill="#fff" filter="url(#mar)" opacity="0.75"/>
<rect x="553" y="0" width="201" height="192" fill="#1d1a16" />
<polygon points="553,30 754,10 754,192 553,192" fill="#fff" filter="url(#mar)" opacity="0.8"/>
<g filter="url(#b2)" opacity=".9">
<ellipse cx="575" cy="70" rx="14" ry="10" fill="#27231e" />
<ellipse cx="590" cy="120" rx="16" ry="12" fill="#2b2722" />
<ellipse cx="568" cy="140" rx="10" ry="14" fill="#221e1a" />
<ellipse cx="600" cy="85" rx="8" ry="18" fill="#2e2a25" />
<ellipse cx="580" cy="180" rx="18" ry="8" fill="#2a2621" />
<ellipse cx="740" cy="60" rx="10" ry="14" fill="#26221d" />
<ellipse cx="742" cy="130" rx="9" ry="20" fill="#2a2520" />
<ellipse cx="735" cy="170" rx="12" ry="10" fill="#221e1a" />
<ellipse cx="600" cy="50" rx="12" ry="6" fill="#2a2621" />
<ellipse cx="735" cy="95" rx="8" ry="8" fill="#302b25" />
<ellipse cx="560" cy="100" rx="6" ry="16" fill="#2d2924" />
</g>
<path d="M588 40c2 12-4 20 0 30s6 16 2 26" fill="none" stroke="#4a4640" stroke-width="0.8" opacity=".6"/>
<path d="M556 28C558 12 566 3 578 0 M562 28C564 14 572 6 584 3" fill="none" stroke="#6f5a34" stroke-width="2.5" />
<rect x="553" y="0" width="20" height="26" fill="#0f0c09" opacity=".5"/>
<polygon points="552.4,28.6 589.4,28 589.4,38 552.4,39" fill="#75381b" />
<polygon points="552.4,28.6 589.4,28 589.4,30.5 552.4,31" fill="#9a5830" />
<polygon points="553,48 581,49 581,52.5 553,52" fill="#5c2c15" />
<polygon points="590,0 716,0 716,10 596,27 590,27" fill="#14100c" />
<polygon points="597.0,0 606.0,0 606.0,24.6 597.0,25.9" fill="#7a5a32" />
<polygon points="607.9,0 616.9,0 616.9,23.0 607.9,24.3" fill="#866438" />
<polygon points="618.8,0 627.8,0 627.8,21.5 618.8,22.8" fill="#70522c" />
<polygon points="629.7,0 638.7,0 638.7,19.9 629.7,21.2" fill="#8e6c3c" />
<polygon points="640.6,0 649.6,0 649.6,18.4 640.6,19.7" fill="#7a5a32" />
<polygon points="651.5,0 660.5,0 660.5,16.9 651.5,18.1" fill="#866438" />
<polygon points="662.4,0 671.4,0 671.4,15.3 662.4,16.6" fill="#70522c" />
<polygon points="673.3,0 682.3,0 682.3,13.8 673.3,15.0" fill="#8e6c3c" />
<polygon points="684.2,0 693.2,0 693.2,12.2 684.2,13.5" fill="#7a5a32" />
<polygon points="695.1,0 704.1,0 704.1,10.7 695.1,12.0" fill="#866438" />
<polygon points="706.0,0 715.0,0 715.0,9.1 706.0,10.4" fill="#70522c" />
<g opacity=".12">
<rect x="598.0" y="3" width="3" height="12" fill="#c09a58" />
<rect x="608.9" y="3" width="3" height="12" fill="#c09a58" />
<rect x="619.8" y="3" width="3" height="12" fill="#c09a58" />
<rect x="630.7" y="3" width="3" height="12" fill="#c09a58" />
<rect x="641.6" y="3" width="3" height="12" fill="#c09a58" />
<rect x="652.5" y="3" width="3" height="12" fill="#c09a58" />
<rect x="663.4" y="3" width="3" height="12" fill="#c09a58" />
<rect x="674.3" y="3" width="3" height="12" fill="#c09a58" />
<rect x="685.2" y="3" width="3" height="12" fill="#c09a58" />
<rect x="696.1" y="3" width="3" height="12" fill="#c09a58" />
<rect x="707.0" y="3" width="3" height="12" fill="#c09a58" />
</g>
<polygon points="589,27.5 754,10.5 754,20 589,37.5" fill="#75381b" />
<polygon points="589,27.5 754,10.5 754,13 589,30" fill="#995429" />
<polygon points="589,35.5 754,18 754,20 589,37.8" fill="#4e230f" />
<polygon points="713,3 754,0 754,17 713,18" fill="#6c3418" />
<polygon points="713,3 754,0 754,4 713,7" fill="#8a4a26" />
<polygon points="718,24 751,20 752,70 730,86" fill="#2e2b27" opacity=".8"/>
<path d="M716 34c10 10 14 30 10 50" fill="none" stroke="#5a2c16" stroke-width="3" opacity=".7"/>
<path d="M609.0 98A59.5 62.5 0 0 1 728.0 98Z" fill="#0d0a08" />
<path d="M612.0 98A56.5 60.5 0 0 1 725.0 98Z" fill="#8b6c3c" />
<path d="M612.5 98A55 59 0 0 1 722.5 98" fill="none" stroke="#b8935a" stroke-width="1.3" opacity=".6"/>
<path d="M622.5 98A48.8 52.5 0 0 1 720.0999999999999 98Z" fill="#4a230f" />
<path d="M624.8 98A46.5 50 0 0 1 717.8 98Z" fill="#58290f" />
<path d="M627 98A44 47.5 0 0 1 715 98" fill="none" stroke="#7e421f" stroke-width="3" opacity=".7"/>
<path d="M634.5 92A39.5 38.5 0 0 1 713.5 92Z" fill="#3a1a0b" />
<path d="M636 91A38 36.3 0 0 1 712 91Z" fill="#ac9c76" />
<path d="M637 91A37 35.3 0 0 1 711 91" fill="none" stroke="#857450" stroke-width="1.6" />
<path d="M647.5 91A26 24.5 0 0 1 699.5 91" fill="none" stroke="#774838" stroke-width="2.2" />
<path d="M652.0 91A21.5 20 0 0 1 695.0 91" fill="none" stroke="#bfb08a" stroke-width="3" />
<line x1="644.2" y1="83.8" x2="640.3" y2="82.9" stroke="#56442c" stroke-width="2.4" />
<line x1="648.1" y1="74.9" x2="644.7" y2="72.8" stroke="#56442c" stroke-width="2.4" />
<line x1="654.9" y1="67.8" x2="652.4" y2="64.6" stroke="#56442c" stroke-width="2.4" />
<line x1="663.9" y1="63.1" x2="662.6" y2="59.3" stroke="#56442c" stroke-width="2.4" />
<line x1="674.0" y1="61.5" x2="674.0" y2="57.5" stroke="#56442c" stroke-width="2.4" />
<line x1="684.1" y1="63.1" x2="685.4" y2="59.3" stroke="#56442c" stroke-width="2.4" />
<line x1="693.1" y1="67.8" x2="695.6" y2="64.6" stroke="#56442c" stroke-width="2.4" />
<line x1="699.9" y1="74.9" x2="703.3" y2="72.8" stroke="#56442c" stroke-width="2.4" />
<line x1="703.8" y1="83.8" x2="707.7" y2="82.9" stroke="#56442c" stroke-width="2.4" />
<path d="M658 91A14 13.5 0 0 1 686 91Z" fill="#6e4a22" />
<path d="M660.5 91A11.5 11 0 0 1 683.5 91Z" fill="#a87a3c" />
<path d="M664 91A8 8 0 0 1 680 91Z" fill="#c8944c" />
<ellipse cx="673" cy="86" rx="3.5" ry="2.5" fill="#eac888" opacity=".8"/>
<line x1="676" y1="86" x2="692" y2="68" stroke="#8a7a5a" stroke-width="0.7" />
<polygon points="627,91 716,91 719,97.6 623,97.6" fill="#5a2912" />
<polygon points="611.5,97 725,100 725,105 611.5,103" fill="#846838" />
<polygon points="611.5,97 725,100 725,101.5 611.5,98.5" fill="#a08248" />
<polygon points="611.5,103 725,105 725,109 611.5,106.5" fill="#55280f" />
<polygon points="613,106.5 725,109 725,117 613,111" fill="#765a2e" />
<polygon points="613,110 725,116 725,118.5 613,112" fill="#5a4420" />
<polygon points="613,110 725,118 725,192 613,192" fill="#4e2612" />
<rect x="613" y="110" width="3" height="82" fill="#7a5a30" />
<polygon points="620,114 664,117 664,192 620,192" fill="#643018" />
<polygon points="625.5,119 661,122 661,192 625.5,192" fill="#45200e" />
<polygon points="629,123.7 659.7,126.5 659.7,159 629,159" fill="#26231d" />
<polygon points="632,135 658,130 658,150 632,156" fill="#3c382d" opacity=".8"/>
<rect x="629" y="161" width="30.7" height="12" fill="#8a4822" />
<rect x="629" y="161" width="30.7" height="2" fill="#a8643a" />
<rect x="629" y="174.5" width="30" height="18" fill="#1a1712" />
<rect x="664" y="117" width="6" height="75" fill="#3e1d0d" />
<polygon points="670,118 725,121 725,192 670,192" fill="#5e2d16" />
<polygon points="677,124.5 724,127.5 724,192 677,192" fill="#431f0d" />
<polygon points="683,131 722,134 722,157 683,155" fill="#2e2a22" />
<rect x="693" y="134" width="6" height="3" fill="#c8c8c0" />
<polygon points="683,146 700,143 722,150 722,153 683,152" fill="#6a6258" opacity=".7"/>
<rect x="683" y="159" width="39" height="11.6" fill="#8a4822" />
<rect x="683" y="159" width="39" height="2" fill="#a8643a" />
<rect x="684" y="171.5" width="38" height="21" fill="#2e1c18" />
<rect x="684" y="177" width="38" height="2.2" fill="#5e2a24" />
<rect x="684" y="183" width="38" height="2.2" fill="#5e2a24" />
<rect x="684" y="189" width="38" height="2.2" fill="#5e2a24" />
<rect x="684" y="174" width="38" height="1.3" fill="#6a5c48" opacity=".6"/>
<rect x="684" y="180" width="38" height="1.3" fill="#6a5c48" opacity=".6"/>
<rect x="684" y="186" width="38" height="1.3" fill="#6a5c48" opacity=".6"/>
<polygon points="553,156 575,155 608,165 608,176 575,168 553,169" fill="#8c4a24" />
<polygon points="553,156 575,155 608,165 608,167 575,157.5 553,158.5" fill="#b06a38" />
<rect x="407" y="95" width="36" height="24" fill="#858078" />
<rect x="410" y="98" width="11" height="14" fill="#2e2c2a" />
<rect x="424" y="99" width="11" height="14" fill="#383634" />
<rect x="407" y="116" width="36" height="3" fill="#5a5650" />
<rect x="407" y="95" width="36" height="2" fill="#a09a90" />
<rect x="443" y="100" width="10" height="14" fill="#2a2622" />
<rect x="436" y="112" width="12" height="8" fill="#3a3024" />
<rect x="457" y="104" width="6" height="24" fill="#1e2418" />
<rect x="458" y="113" width="4" height="8" fill="#b8b09a" />
<rect x="459" y="98" width="2" height="7" fill="#5a4428" />
<rect x="465" y="102" width="7" height="26" fill="#4a4a30" />
<rect x="466" y="112" width="5" height="10" fill="#d0c8a8" />
<rect x="467.5" y="97" width="2" height="6" fill="#6a5430" />
<rect x="473" y="104" width="6" height="25" fill="#1a2016" />
<rect x="474" y="113" width="4" height="9" fill="#c0b48c" />
<rect x="475" y="98" width="2" height="7" fill="#5a4428" />
<polygon points="436,122 481,127 481,135 438,135" fill="#7e3f1e" />
<polygon points="438,129.5 481,129.5 481,134.5 438,134.5" fill="#a05a2e" />
<rect x="442" y="126" width="14" height="2.5" fill="#3a2a1e" />
<rect x="440" y="134" width="42" height="22" fill="#24221f" />
<polygon points="366,108 373,108 373,134 412,147 398,158 380,158 366,142" fill="#3a362f" />
<polygon points="383,145 387,139.5 403,148 397,158 383,158" fill="#9c968a" />
<polygon points="372,108 400,112 440,124 440,131 400,120 372,111" fill="#8a4822" />
<polygon points="372,108 400,112 440,124 440,126 400,114.5 372,110" fill="#a86034" />
<polygon points="372,110.5 440,130 440,156 372,134" fill="#5c2d15" />
<line x1="380" y1="115.32" x2="380" y2="136.56" stroke="#3e1c0c" stroke-width="1" />
<line x1="388" y1="117.64" x2="388" y2="139.12" stroke="#3e1c0c" stroke-width="1" />
<line x1="396" y1="119.96" x2="396" y2="141.68" stroke="#3e1c0c" stroke-width="1" />
<line x1="405" y1="122.57" x2="405" y2="144.56" stroke="#3e1c0c" stroke-width="1" />
<line x1="414" y1="125.18" x2="414" y2="147.44" stroke="#3e1c0c" stroke-width="1" />
<line x1="423" y1="127.78999999999999" x2="423" y2="150.32" stroke="#3e1c0c" stroke-width="1" />
<line x1="432" y1="130.4" x2="432" y2="153.2" stroke="#3e1c0c" stroke-width="1" />
<line x1="400" y1="126.0" x2="408" y2="128.5" stroke="#3e1c0c" stroke-width="0.8" />
<line x1="414" y1="130.2" x2="422" y2="132.7" stroke="#3e1c0c" stroke-width="0.8" />
<line x1="428" y1="134.4" x2="436" y2="136.9" stroke="#3e1c0c" stroke-width="0.8" />
<polygon points="481,130 525,143 525,150 481,138" fill="#8a4421" />
<polygon points="481,130 525,143 525,145 481,132" fill="#a85e30" />
<path d="M528 70V145L555 153V70" fill="none" stroke="#9c9c94" stroke-width="5" opacity=".8"/>
<path d="M527 72V146L556 154" fill="none" stroke="#d8d8d0" stroke-width="1" opacity=".6" stroke-dasharray="3 2"/>
<path d="M532.500 72V141L551 146.500V72" fill="none" stroke="#2a2a28" stroke-width="1.4" />
<rect x="518" y="132" width="10" height="1.5" fill="#6a6a64" />
<polygon points="400,160 418,156 468,155 480,166 545,166 577,164 577,176 479,178 400,178" fill="#8a4822" />
<polygon points="480,166 577,164 577,167 480,169" fill="#b06a38" />
<polygon points="411,158 466,156 469,164 414,166" fill="#9a5228" />
<polygon points="411,158 466,156 466.5,157.5 411.5,159.5" fill="#b87040" />
<polygon points="400,157 414,162 412,168 400,166" fill="#5a2a14" />
<polygon points="400,170 420,170 420,180 400,180" fill="#7a3c1c" />
<polygon points="540,152 577,160 577,165 540,166" fill="#7e3f1e" />
<polygon points="540,152 577,160 577,161.5 540,154" fill="#a86034" />
<polygon points="417,166 478,166 479,192 420,192" fill="#d9a878" />
<polygon points="418,169 478,169 478,171 418.5,171" fill="#a83a2a" />
<polygon points="418,175 478,175 478,178.5 418.5,178.5" fill="#a83a2a" />
<polygon points="418,182 478,182 478,184.5 418.5,184.5" fill="#a83a2a" />
<polygon points="418,187 478,187 478,190 418.5,190" fill="#a83a2a" />
<polygon points="466,157 483,155 503,157 502,164 480,166 468,163" fill="#ddd6c6" />
<polygon points="480,160 503,158 502,164 482,166" fill="#c8c0b0" />
<rect x="484.5" y="152" width="9" height="15" fill="#2f7a5c" />
<rect x="485" y="148" width="8" height="5" fill="#9aa69a" opacity=".8"/>
<rect x="487.5" y="142" width="3" height="7" fill="#8a6a3a" />
<rect x="485.5" y="156" width="7" height="6" fill="#3f9a74" />
<path d="M504 149q0-3 3-3h29q4 0 4 4v13q0 3-3 3h-30q-3 0-3-3Z" fill="#6b4428" />
<rect x="508" y="151" width="28" height="11" fill="#c9b384" rx="2"/>
<rect x="511" y="152" width="22" height="5" fill="#6a5238" />
<ellipse cx="514" cy="160" rx="2" ry="2" fill="#e8d8a0" />
<ellipse cx="531" cy="160" rx="2" ry="2" fill="#e8d8a0" />
<polygon points="479,178 577,176 600,178 600,192 479,192" fill="#24211e" />
<polygon points="479,178 577,176 600,178 600,192 479,192" fill="#fff" filter="url(#mar)" opacity="0.8"/>
<g filter="url(#b2)" opacity=".8">
<ellipse cx="520" cy="186" rx="14" ry="4" fill="#3a3632" />
<ellipse cx="560" cy="184" rx="10" ry="5" fill="#34302c" />
</g>
<rect x="400" y="180" width="20" height="12" fill="#1a1714" />
<path d="M398 186a3 3 0 0 1 3 3" fill="none" stroke="#c8c8c8" stroke-width="1" />
<rect x="200" y="104" width="92" height="7" fill="#6a3418" />
<rect x="200" y="104" width="92" height="1.5" fill="#8a4a26" />
<rect x="241" y="111" width="48" height="17" fill="#15110e" />
<ellipse cx="262" cy="122" rx="14" ry="5" fill="#221d18" />
<rect x="241" y="127" width="47" height="6" fill="#7a3c1c" />
<rect x="241" y="127" width="47" height="1.5" fill="#9a5428" />
<rect x="241" y="133" width="47" height="11" fill="#3a2e1c" />
<rect x="243.0" y="134" width="2.4" height="9" fill="#9a8250" />
<rect x="247.6" y="134" width="2.4" height="9" fill="#9a8250" />
<rect x="252.2" y="134" width="2.4" height="9" fill="#9a8250" />
<rect x="256.8" y="134" width="2.4" height="9" fill="#9a8250" />
<rect x="261.4" y="134" width="2.4" height="9" fill="#9a8250" />
<rect x="266.0" y="134" width="2.4" height="9" fill="#9a8250" />
<rect x="270.6" y="134" width="2.4" height="9" fill="#9a8250" />
<rect x="275.2" y="134" width="2.4" height="9" fill="#9a8250" />
<rect x="279.8" y="134" width="2.4" height="9" fill="#9a8250" />
<rect x="284.4" y="134" width="2.4" height="9" fill="#9a8250" />
<polygon points="240.75,143 286.6,143 296,192 219,192" fill="#787266" />
<polygon points="239.7,143.0 244.1,143.0 243.4,144.9 238.9,144.9" fill="#bab29c" />
<polygon points="248.5,143.0 252.8,143.0 252.3,144.9 247.9,144.9" fill="#bab29c" />
<polygon points="257.2,143.0 261.5,143.0 261.2,144.9 256.8,144.9" fill="#bab29c" />
<polygon points="265.9,143.0 270.3,143.0 270.2,144.9 265.7,144.9" fill="#bab29c" />
<polygon points="274.6,143.0 279.0,143.0 279.1,144.9 274.6,144.9" fill="#bab29c" />
<polygon points="283.3,143.0 287.7,143.0 288.0,144.9 283.6,144.9" fill="#bab29c" />
<polygon points="243.4,144.9 247.9,144.9 247.2,146.92 242.6,146.92" fill="#bab29c" />
<polygon points="252.3,144.9 256.8,144.9 256.4,146.92 251.8,146.92" fill="#bab29c" />
<polygon points="261.2,144.9 265.7,144.9 265.5,146.92 260.9,146.92" fill="#bab29c" />
<polygon points="270.2,144.9 274.6,144.9 274.7,146.92 270.1,146.92" fill="#bab29c" />
<polygon points="279.1,144.9 283.6,144.9 283.8,146.92 279.2,146.92" fill="#bab29c" />
<polygon points="238.1,146.92 242.6,146.92 241.9,149.06 237.2,149.06" fill="#bab29c" />
<polygon points="247.2,146.92 251.8,146.92 251.2,149.06 246.5,149.06" fill="#bab29c" />
<polygon points="256.4,146.92 260.9,146.92 260.6,149.06 255.9,149.06" fill="#bab29c" />
<polygon points="265.5,146.92 270.1,146.92 270.0,149.06 265.3,149.06" fill="#bab29c" />
<polygon points="274.7,146.92 279.2,146.92 279.4,149.06 274.7,149.06" fill="#bab29c" />
<polygon points="283.8,146.92 288.4,146.92 288.7,149.06 284.0,149.06" fill="#bab29c" />
<polygon points="241.9,149.06 246.5,149.06 245.8,151.34 241.0,151.34" fill="#bab29c" />
<polygon points="251.2,149.06 255.9,149.06 255.4,151.34 250.6,151.34" fill="#bab29c" />
<polygon points="260.6,149.06 265.3,149.06 265.1,151.34 260.3,151.34" fill="#bab29c" />
<polygon points="270.0,149.06 274.7,149.06 274.7,151.34 269.9,151.34" fill="#bab29c" />
<polygon points="279.4,149.06 284.0,149.06 284.3,151.34 279.5,151.34" fill="#bab29c" />
<polygon points="236.2,151.34 241.0,151.34 240.1,153.76 235.2,153.76" fill="#bab29c" />
<polygon points="245.8,151.34 250.6,151.34 250.0,153.76 245.1,153.76" fill="#bab29c" />
<polygon points="255.4,151.34 260.3,151.34 259.9,153.76 254.9,153.76" fill="#bab29c" />
<polygon points="265.1,151.34 269.9,151.34 269.8,153.76 264.8,153.76" fill="#bab29c" />
<polygon points="274.7,151.34 279.5,151.34 279.6,153.76 274.7,153.76" fill="#bab29c" />
<polygon points="284.3,151.34 289.1,151.34 289.5,153.76 284.6,153.76" fill="#bab29c" />
<polygon points="240.1,153.76 245.1,153.76 244.2,156.33 239.2,156.33" fill="#bab29c" />
<polygon points="250.0,153.76 254.9,153.76 254.4,156.33 249.3,156.33" fill="#bab29c" />
<polygon points="259.9,153.76 264.8,153.76 264.6,156.33 259.5,156.33" fill="#bab29c" />
<polygon points="269.8,153.76 274.7,153.76 274.7,156.33 269.6,156.33" fill="#bab29c" />
<polygon points="279.6,153.76 284.6,153.76 284.9,156.33 279.8,156.33" fill="#bab29c" />
<polygon points="234.1,156.33 239.2,156.33 238.2,159.06 232.9,159.06" fill="#bab29c" />
<polygon points="244.2,156.33 249.3,156.33 248.6,159.06 243.4,159.06" fill="#bab29c" />
<polygon points="254.4,156.33 259.5,156.33 259.1,159.06 253.8,159.06" fill="#bab29c" />
<polygon points="264.6,156.33 269.6,156.33 269.5,159.06 264.3,159.06" fill="#bab29c" />
<polygon points="274.7,156.33 279.8,156.33 280.0,159.06 274.7,159.06" fill="#bab29c" />
<polygon points="284.9,156.33 290.0,156.33 290.4,159.06 285.2,159.06" fill="#bab29c" />
<polygon points="238.2,159.06 243.4,159.06 242.5,161.95 237.1,161.95" fill="#bab29c" />
<polygon points="248.6,159.06 253.8,159.06 253.2,161.95 247.9,161.95" fill="#bab29c" />
<polygon points="259.1,159.06 264.3,159.06 264.0,161.95 258.6,161.95" fill="#bab29c" />
<polygon points="269.5,159.06 274.7,159.06 274.8,161.95 269.4,161.95" fill="#bab29c" />
<polygon points="280.0,159.06 285.2,159.06 285.5,161.95 280.2,161.95" fill="#bab29c" />
<polygon points="231.7,161.95 237.1,161.95 236.0,165.02 230.4,165.02" fill="#bab29c" />
<polygon points="242.5,161.95 247.9,161.95 247.1,165.02 241.5,165.02" fill="#bab29c" />
<polygon points="253.2,161.95 258.6,161.95 258.2,165.02 252.6,165.02" fill="#bab29c" />
<polygon points="264.0,161.95 269.4,161.95 269.2,165.02 263.7,165.02" fill="#bab29c" />
<polygon points="274.8,161.95 280.2,161.95 280.3,165.02 274.8,165.02" fill="#bab29c" />
<polygon points="285.5,161.95 290.9,161.95 291.4,165.02 285.9,165.02" fill="#bab29c" />
<polygon points="236.0,165.02 241.5,165.02 240.5,168.28 234.8,168.28" fill="#bab29c" />
<polygon points="247.1,165.02 252.6,165.02 251.9,168.28 246.2,168.28" fill="#bab29c" />
<polygon points="258.2,165.02 263.7,165.02 263.4,168.28 257.6,168.28" fill="#bab29c" />
<polygon points="269.2,165.02 274.8,165.02 274.8,168.28 269.1,168.28" fill="#bab29c" />
<polygon points="280.3,165.02 285.9,165.02 286.3,168.28 280.5,168.28" fill="#bab29c" />
<polygon points="229.0,168.28 234.8,168.28 233.5,171.75 227.6,171.75" fill="#bab29c" />
<polygon points="240.5,168.28 246.2,168.28 245.3,171.75 239.4,171.75" fill="#bab29c" />
<polygon points="251.9,168.28 257.6,168.28 257.1,171.75 251.2,171.75" fill="#bab29c" />
<polygon points="263.4,168.28 269.1,168.28 268.9,171.75 263.0,171.75" fill="#bab29c" />
<polygon points="274.8,168.28 280.5,168.28 280.8,171.75 274.8,171.75" fill="#bab29c" />
<polygon points="286.3,168.28 292.0,168.28 292.6,171.75 286.7,171.75" fill="#bab29c" />
<polygon points="233.5,171.75 239.4,171.75 238.2,175.43 232.1,175.43" fill="#bab29c" />
<polygon points="245.3,171.75 251.2,171.75 250.4,175.43 244.3,175.43" fill="#bab29c" />
<polygon points="257.1,171.75 263.0,171.75 262.7,175.43 256.5,175.43" fill="#bab29c" />
<polygon points="268.9,171.75 274.8,171.75 274.9,175.43 268.8,175.43" fill="#bab29c" />
<polygon points="280.8,171.75 286.7,171.75 287.1,175.43 281.0,175.43" fill="#bab29c" />
<polygon points="226.0,175.43 232.1,175.43 230.7,179.34 224.4,179.34" fill="#bab29c" />
<polygon points="238.2,175.43 244.3,175.43 243.3,179.34 237.0,179.34" fill="#bab29c" />
<polygon points="250.4,175.43 256.5,175.43 255.9,179.34 249.6,179.34" fill="#bab29c" />
<polygon points="262.7,175.43 268.8,175.43 268.6,179.34 262.3,179.34" fill="#bab29c" />
<polygon points="274.9,175.43 281.0,175.43 281.2,179.34 274.9,179.34" fill="#bab29c" />
<polygon points="287.1,175.43 293.2,175.43 293.9,179.34 287.5,179.34" fill="#bab29c" />
<polygon points="230.7,179.34 237.0,179.34 235.7,183.49 229.1,183.49" fill="#bab29c" />
<polygon points="243.3,179.34 249.6,179.34 248.8,183.49 242.2,183.49" fill="#bab29c" />
<polygon points="255.9,179.34 262.3,179.34 261.9,183.49 255.3,183.49" fill="#bab29c" />
<polygon points="268.6,179.34 274.9,179.34 274.9,183.49 268.4,183.49" fill="#bab29c" />
<polygon points="281.2,179.34 287.5,179.34 288.0,183.49 281.5,183.49" fill="#bab29c" />
<polygon points="222.6,183.49 229.1,183.49 227.5,187.9 220.7,187.9" fill="#bab29c" />
<polygon points="235.7,183.49 242.2,183.49 241.1,187.9 234.3,187.9" fill="#bab29c" />
<polygon points="248.8,183.49 255.3,183.49 254.6,187.9 247.9,187.9" fill="#bab29c" />
<polygon points="261.9,183.49 268.4,183.49 268.2,187.9 261.4,187.9" fill="#bab29c" />
<polygon points="274.9,183.49 281.5,183.49 281.7,187.9 275.0,187.9" fill="#bab29c" />
<polygon points="288.0,183.49 294.6,183.49 295.3,187.9 288.5,187.9" fill="#bab29c" />
<polygon points="227.5,187.9 234.3,187.9 233.0,192 226.0,192" fill="#bab29c" />
<polygon points="241.1,187.9 247.9,187.9 247.0,192 240.0,192" fill="#bab29c" />
<polygon points="254.6,187.9 261.4,187.9 261.0,192 254.0,192" fill="#bab29c" />
<polygon points="268.2,187.9 275.0,187.9 275.0,192 268.0,192" fill="#bab29c" />
<polygon points="281.7,187.9 288.5,187.9 289.0,192 282.0,192" fill="#bab29c" />
<rect x="292" y="96" width="30" height="14" fill="#1b1815" />
<rect x="293" y="80" width="5" height="18" fill="#1a1714" />
<rect x="299" y="84" width="5" height="14" fill="#221e1a" />
<rect x="304" y="88" width="10" height="10" fill="#2a2420" />
<rect x="300" y="78" width="3" height="4" fill="#d8d8d0" />
<rect x="304.7" y="89" width="13.3" height="12" fill="#a47666" rx="2"/>
<rect x="304.7" y="87.5" width="13.3" height="3" fill="#2a2420" />
<path d="M290 98L296 122 M294 99H334V104" fill="none" stroke="#a8843c" stroke-width="1.5" />
<polygon points="286,110 300,106 322,105 322,192 296,192" fill="#24221f" />
<polygon points="286,110 294,108 302,150 298,160" fill="#6a3418" />
<polygon points="286,110 292,109 300,140 297,150" fill="#8a4a26" />
<path d="M296 150C296 125 304 110 322 105" fill="none" stroke="#5a5650" stroke-width="1" />
<polygon points="296,150 300,150 302,192 296,192" fill="#3a3630" />
<rect x="328" y="109" width="33" height="12" fill="#6e685e" />
<rect x="328" y="108.5" width="33" height="2.5" fill="#8a4a2a" />
<rect x="330" y="113" width="28" height="4.5" fill="#8e887c" />
<rect x="332" y="113.5" width="1.2" height="3.5" fill="#5a564e" />
<rect x="335" y="113.5" width="1.2" height="3.5" fill="#5a564e" />
<rect x="338" y="113.5" width="1.2" height="3.5" fill="#5a564e" />
<rect x="341" y="113.5" width="1.2" height="3.5" fill="#5a564e" />
<rect x="344" y="113.5" width="1.2" height="3.5" fill="#5a564e" />
<rect x="347" y="113.5" width="1.2" height="3.5" fill="#5a564e" />
<rect x="350" y="113.5" width="1.2" height="3.5" fill="#5a564e" />
<rect x="353" y="113.5" width="1.2" height="3.5" fill="#5a564e" />
<rect x="356" y="113.5" width="1.2" height="3.5" fill="#5a564e" />
<polygon points="329,120.5 356,122 356,145 329,143" fill="#7e786c" />
<polygon points="356,121 367,119.5 368,143 356,146" fill="#8a8478" />
<rect x="334" y="126" width="18" height="2.2" fill="#5e5a52" />
<rect x="336" y="130.5" width="14" height="2" fill="#5e5a52" />
<rect x="335" y="135" width="16" height="2" fill="#5e5a52" />
<rect x="361" y="125" width="4" height="12" fill="#7a766c" />
<polygon points="327,143 381,146.5 383,161 327,160" fill="#8a4822" />
<polygon points="327,143 381,146.5 381,148 327,144.8" fill="#c29a50" />
<polygon points="327,150 383,153 383,154.5 327,151.5" fill="#b08a44" opacity=".8"/>
<polygon points="324,159 384,161 374,167 332,165" fill="#9a7434" />
<path d="M297 155C299 151 304 150 310 151L330 160L400 160L422 160V179L320 171.5C306 170.500 298 166 297 155Z" fill="#92491f" />
<path d="M300 157C306 158 314 162 330 164L400 169" fill="none" stroke="#b86c38" stroke-width="6" opacity=".6"/>
<path d="M297 156C298 166 306 170.500 320 171.500L422 179V182L320 175C305 174 297 167 297 156Z" fill="#5e2c13" />
<polygon points="374,163.5 393,164.5 392,168 373,167" fill="#b5b0a4" />
<polygon points="397,156 414,155 416,167 399,168" fill="#6a3018" />
<polygon points="397,156 414,155 414.5,157 397.5,158" fill="#9a5428" />
<path d="M299 166C304 173 312 175 320 175L422 182V192H300Z" fill="#363532" />
<g font-family="Liberation Serif,serif" font-weight="700" fill="#e4d6b2" stroke="#4a2c18" stroke-width=".7"><text x="325" y="198" font-size="36" textLength="15" lengthAdjust="spacingAndGlyphs">H</text><text x="340" y="196" font-size="22" textLength="65" lengthAdjust="spacingAndGlyphs">ENRY’S</text></g>
<path d="M324 186c-5-2-5-10 2-12" fill="none" stroke="#e4d6b2" stroke-width="1.8" />
<path d="M311 111H328L333 134Q319 137 303 134Z" fill="#f3dcbc" />
<radialGradient id="lg2" cx=".5" cy=".55" r=".6"><stop offset="0" stop-color="#ffffff"/><stop offset=".6" stop-color="#fff2e0"/><stop offset="1" stop-color="#eccaa0"/></radialGradient>
<path d="M311 111H328L333 134Q319 137 303 134Z" fill="url(#lg2)" />
<rect x="316" y="136" width="6" height="5" fill="#3a2a1c" />
<ellipse cx="319" cy="149" rx="8" ry="7.5" fill="#15110e" />
<ellipse cx="319" cy="143" rx="5" ry="3" fill="#241c16" />
<ellipse cx="316" cy="147" rx="1.5" ry="3" fill="#5a5650" opacity=".7"/>
<polygon points="304,141 310,137 312,150 303,153" fill="#cc7430" opacity=".9"/>
<path d="M296 151C297 128 306 112 321 106" fill="none" stroke="#6a6660" stroke-width="1" />
<polygon points="0,172 24,166 62,150 126,131 160,118 160,124 126,140 70,162 30,180 0,186" fill="#5e2e16" />
<polygon points="62,150 126,131 160,118 160,120 126,134 62,153" fill="#8a4a26" />
<polygon points="166.8,111 240.75,110.6 240.75,148 234.5,148 234.5,115 166.8,115.5" fill="#7a3c1c" />
<polygon points="166.8,111 240.75,110.6 240.75,112.2 166.8,112.6" fill="#a05a2e" />
<rect x="172" y="115.2" width="62" height="4.5" fill="#4d3a33" />
<polygon points="142.8,119.5 235.5,119 235.5,159.5 228,159.5 228,124.5 142.8,125" fill="#85431f" />
<polygon points="142.8,119.5 235.5,119 235.5,121 142.8,121.5" fill="#b06a38" />
<rect x="147" y="126" width="81" height="9" fill="#4d3a33" />
<line x1="157" y1="126" x2="157" y2="135" stroke="#33241e" stroke-width="0.8" />
<line x1="167" y1="126" x2="167" y2="135" stroke="#33241e" stroke-width="0.8" />
<line x1="177" y1="126" x2="177" y2="135" stroke="#33241e" stroke-width="0.8" />
<line x1="187" y1="126" x2="187" y2="135" stroke="#33241e" stroke-width="0.8" />
<line x1="197" y1="126" x2="197" y2="135" stroke="#33241e" stroke-width="0.8" />
<line x1="207" y1="126" x2="207" y2="135" stroke="#33241e" stroke-width="0.8" />
<line x1="217" y1="126" x2="217" y2="135" stroke="#33241e" stroke-width="0.8" />
<line x1="227" y1="126" x2="227" y2="135" stroke="#33241e" stroke-width="0.8" />
<rect x="172" y="113" width="3" height="9" fill="#8a8a86" />
<rect x="139" y="120" width="4" height="12" fill="#9a9a96" />
<polygon points="221,150 231.4,150 231.4,171 221,171" fill="#55301c" />
<rect x="221" y="150" width="10.4" height="3" fill="#7a3c1c" />
<polygon points="124,134.5 227,133.5 227,140.8 124,141.5" fill="#8e4a26" />
<polygon points="150,134.3 227,133.5 227,136.5 150,137.3" fill="#b8703c" />
<polygon points="87.6,141.5 221,140.8 221,192 209.5,192 209.5,148.5 87.6,149.5" fill="#8a4622" />
<polygon points="87.6,141.5 221,140.8 221,143.6 87.6,144.5" fill="#b8703c" />
<polygon points="86,146 93,146 93,166 86,168" fill="#7a3c1c" />
<rect x="91.8" y="149.2" width="117.7" height="15" fill="#4d3a33" />
<line x1="91.8" y1="151" x2="209.5" y2="150.5" stroke="#6a544a" stroke-width="0.9" />
<line x1="106.5" y1="149.5" x2="106.5" y2="164" stroke="#33241e" stroke-width="1" />
<line x1="121" y1="149.5" x2="121" y2="164" stroke="#33241e" stroke-width="1" />
<line x1="135.5" y1="149.5" x2="135.5" y2="164" stroke="#33241e" stroke-width="1" />
<line x1="150" y1="149.5" x2="150" y2="164" stroke="#33241e" stroke-width="1" />
<line x1="164.5" y1="149.5" x2="164.5" y2="164" stroke="#33241e" stroke-width="1" />
<line x1="179" y1="149.5" x2="179" y2="164" stroke="#33241e" stroke-width="1" />
<line x1="193.5" y1="149.5" x2="193.5" y2="164" stroke="#33241e" stroke-width="1" />
<polygon points="209.5,148.5 221,148 221,192 209.5,192" fill="#6a3218" />
<polygon points="209.5,143 213,143 213,192 209.5,192" fill="#9a5228" opacity=".6"/>
<polygon points="221,171 231,171 224,192 221,192" fill="#3a2010" />
<polygon points="72,151 78,152 78,172 72,172" fill="#a8a8a4" />
<polygon points="74,152 80,156 79,160 74,158" fill="#d0d0cc" />
<polygon points="59,152 72,151 72,172 59,174" fill="#6a3418" />
<linearGradient id="tbl" x1="0" x2="1"><stop offset="0" stop-color="#5e2c14"/><stop offset=".3" stop-color="#7a3e1e"/><stop offset=".62" stop-color="#a45e32"/><stop offset=".85" stop-color="#96522a"/><stop offset="1" stop-color="#7a3e1e"/></linearGradient>
<polygon points="24,184 78,166.5 207.4,161.6 207.4,169.5 201,177 190,177 188.7,184 186,188.7 26,192" fill="#4e2410" />
<polygon points="28,183 78,166.5 207.4,161.6 207.4,169 184.5,169.5 188.7,183.5 28,187.5" fill="url(#tbl)" />
<polygon points="78,166.5 207.4,161.6 207.4,164 78,169.5" fill="#b06a38" opacity=".7"/>
<polygon points="184.5,169.5 207.4,169 207.4,172.5 186,173.5" fill="#6a3218" />
<polygon points="26,187.5 188.7,183.5 187.5,187.5 26,191" fill="#8a7448" />
<polygon points="190.75,173 201,173 201,177 190.75,177" fill="#9a8450" />
<polygon points="176,188.7 188.7,184 209.5,176 209.5,192 176,192" fill="#3a1c0d" />
<rect x="170.5" y="155.5" width="8.5" height="8" fill="#1b1916" rx="1.5"/>
<ellipse cx="174.7" cy="156" rx="4.2" ry="1.3" fill="#4a4640" />
<ellipse cx="177" cy="164.5" rx="8" ry="1.8" fill="#4e2410" opacity=".7"/>
<line x1="155" y1="168.5" x2="180" y2="167" stroke="#1b1510" stroke-width="1.2" />
<radialGradient id="glow"><stop offset="0" stop-color="#c07a3c" stop-opacity=".35"/><stop offset="1" stop-color="#c07a3c" stop-opacity="0"/></radialGradient>
<ellipse cx="40" cy="140" rx="48" ry="40" fill="url(#glow)" />
<radialGradient id="lg1" cx=".5" cy=".5" r=".65"><stop offset="0" stop-color="#ffffff"/><stop offset=".6" stop-color="#fffaf0"/><stop offset="1" stop-color="#f5e2c8"/></radialGradient>
<path d="M22 121H53L64 151Q40 158 13 152Z" fill="url(#lg1)" />
<path d="M22 121H53L53.500 123H21.500Z" fill="#c8b090" />
<path d="M13 152Q40 158 64 151L64 152.5Q40 159.5 13 153.500Z" fill="#c8a882" />
<rect x="35" y="155" width="8" height="6" fill="#2a2018" />
<ellipse cx="39" cy="165" rx="8" ry="5" fill="#1c1612" />
<ellipse cx="39" cy="175" rx="13" ry="8.5" fill="#14100d" />
<ellipse cx="39" cy="182" rx="11" ry="3" fill="#0e0b09" />
<ellipse cx="34" cy="172" rx="2" ry="5" fill="#5e5a54" opacity=".7"/>
<ellipse cx="45" cy="168" rx="1.5" ry="3" fill="#4a4640" opacity=".6"/>
<polygon points="0,176 14,175 24,184 27,192 0,192" fill="#7a3c1c" />
<polygon points="0,181 13,180 20,192 0,192" fill="#b7ab98" /></g></svg>
<div class="t" style="left:463.40px;top:257.88px;font-size:24px;line-height:24px;font-weight:700;color:#27272a;letter-spacing:-0.451px;-webkit-text-stroke:0.3px #27272a;">Two Feathers Coffee and Books</div>
<div class="abs" style="left:463px;top:301px;width:624px;height:1px;background:#e4e4e7"></div>
<div class="t" style="left:463.40px;top:322.15px;font-size:14px;line-height:14px;color:#2563eb;letter-spacing:0.298px;-webkit-text-stroke:0.35px #2563eb;">Details</div>
<div class="t" style="left:533.60px;top:322.15px;font-size:14px;line-height:14px;color:#71717a;letter-spacing:0.289px;-webkit-text-stroke:0.3px #71717a;">Timeline</div>
<div class="abs" style="left:463px;top:351px;width:624px;height:1px;background:#e4e4e7"></div>
<div class="abs" style="left:463px;top:350px;width:45px;height:2px;background:#2563eb"></div>
<div class="t" style="left:463.60px;top:378.84px;font-size:12px;line-height:12px;color:#71717a;letter-spacing:-0.171px;-webkit-text-stroke:0.25px #71717a;">TYPE</div>
<div class="t" style="left:783.60px;top:378.84px;font-size:12px;line-height:12px;color:#71717a;letter-spacing:0.262px;-webkit-text-stroke:0.25px #71717a;">ERA / TIME</div>
<div class="abs" style="left:463px;top:396px;width:304px;height:34px;border:1px solid #e4e4e7;border-radius:4px;background:#fafafa"></div>
<div class="abs" style="left:783px;top:396px;width:304px;height:34px;border:1px solid #e4e4e7;border-radius:4px;background:#fafafa"></div>
<div class="t" style="left:472.60px;top:407.15px;font-size:14px;line-height:14px;color:#2e2e33;letter-spacing:0.249px;">Coffee shop, in town</div>
<div class="t" style="left:792.20px;top:407.15px;font-size:14px;line-height:14px;color:#2e2e33;letter-spacing:0.374px;">Victorian-era building</div>
<div class="t" style="left:463.50px;top:456.84px;font-size:12px;line-height:12px;color:#71717a;letter-spacing:0.120px;-webkit-text-stroke:0.25px #71717a;">DESCRIPTION</div>
<div class="abs" style="left:463px;top:478px;width:624px;height:98px;border:1px solid #e4e4e7;border-radius:7px;background:#fafafa"></div>
<div class="t" style="left:476.50px;top:491.15px;font-size:14px;line-height:14px;color:#2e2e33;letter-spacing:0.257px;">One could imagine the interior being easily converted for a saloon for a movie shoot.</div>
<div class="t" style="left:463.50px;top:604.84px;font-size:12px;line-height:12px;color:#71717a;letter-spacing:0.211px;-webkit-text-stroke:0.25px #71717a;">ATMOSPHERE &amp; SENSORY DETAILS</div>
<div class="abs" style="left:463px;top:626px;width:624px;height:78px;border:1px solid #e4e4e7;border-radius:7px;background:#fafafa"></div>
<div class="t" style="left:476.50px;top:639.15px;font-size:14px;line-height:14px;color:#2e2e33;letter-spacing:0.290px;">Warm, spacious, artificially quieted by carpets and ceiling tiles. Wooden floors, wainscoting</div>
<div class="t" style="left:476.50px;top:659.15px;font-size:14px;line-height:14px;color:#2e2e33;letter-spacing:0.231px;">and cornice work. Books jammed into every available space. Slow-paced</div>
<div class="t" style="left:463.50px;top:732.84px;font-size:12px;line-height:12px;color:#71717a;letter-spacing:0.263px;-webkit-text-stroke:0.25px #71717a;">HISTORY &amp; SIGNIFICANCE</div>
<div class="abs" style="left:463px;top:754px;width:624px;height:40px;border:1px solid #e4e4e7;border-radius:7px;background:#fafafa"></div>
<div id="foot" class="abs"></div>
<svg id="icons" class="abs" width="1152" height="768" viewBox="0 0 1152 768" fill="none" stroke-linecap="round" stroke-linejoin="round"><path d="M17 18.2L24 11.5L31 18.2 M18.6 17V23.1a1.3 1.3 0 0 0 1.3 1.3H28.1a1.3 1.3 0 0 0 1.3-1.3V17 M22.3 24.3V20.6a1.7 1.7 0 0 1 3.4 0V24.3" stroke="#b4b4bd" stroke-width="1"/>
<path d="M16.5 70.2V59.9a1 1 0 0 1 1-1H21.6a1 1 0 0 1 .7.3L24.4 61.3H30.5a1 1 0 0 1 1 1V70.2a.8.8 0 0 1-.8.8H17.3a.8.8 0 0 1-.8-.8Z" stroke="#9d9daa" stroke-width="1.25"/>
<path d="M24 105.5a2.5 2.5 0 0 1 2.5-2.5H31a.6.6 0 0 1 .6.6V113.5a.6.6 0 0 1-.6.6H26.5a2.5 2.5 0 0 0-2.5 1.7 M16.4 113.5a.6.6 0 0 0 .6.6H21.5a2.5 2.5 0 0 1 2.5 1.7V105.5A2.5 2.5 0 0 0 21.500 103H17a.6.6 0 0 0-.6.6Z" stroke="#55555f" stroke-width="1.25"/>
<path d="M16.5 160.5V155a.8.8 0 0 1 .8-.8H21.3 M21.3 160.5V151.3a.8.8 0 0 1 .8-.8H26.6 M26.6 160.5V146.6a.8.8 0 0 1 .8-.8H30.7a.8.8 0 0 1 .8.8V160.5 M16.5 160.5H31.5" stroke="#9d9daa" stroke-width="1.25"/>
<circle cx="24" cy="691.6" r="3.9" stroke="#9d9daa" stroke-width="1.2"/><path d="M17.6 703.6C17.9 699.6 20.6 697.400 24 697.400C27.400 697.400 30.100 699.600 30.400 703.600Z" stroke="#9d9daa" stroke-width="1.2"/>
<path d="M22.76 732.10L25.24 732.10L25.42 733.97L27.19 734.70L28.64 733.51L30.39 735.26L29.20 736.71L29.93 738.48L31.80 738.66L31.80 741.14L29.93 741.32L29.20 743.09L30.39 744.54L28.64 746.29L27.19 745.10L25.42 745.83L25.24 747.70L22.76 747.70L22.58 745.83L20.81 745.10L19.36 746.29L17.61 744.54L18.80 743.09L18.07 741.32L16.20 741.14L16.20 738.66L18.07 738.48L18.80 736.71L17.61 735.26L19.36 733.51L20.81 734.70L22.58 733.97Z" stroke="#9d9daa" stroke-width="1.2" stroke-linejoin="round"/><circle cx="24" cy="739.9" r="2.9" stroke="#9d9daa" stroke-width="1.2"/>
<path d="M376.700 48L371.400 52.900L376.700 57.800" stroke="#a8a8b3" stroke-width="0.9"/><path d="M382.200 48L376.900 52.900L382.200 57.800" stroke="#8c8c99" stroke-width="0.9"/>
<path d="M61.90 86.10L66.00 90.30L70.10 86.10" stroke="#6b6b76" stroke-width="0.9"/>
<path d="M58.10 119.95L62.00 123.85L65.90 119.95" stroke="#85858f" stroke-width="0.85"/>
<circle cx="67" cy="142.00" r="2.7" stroke="#d6adff" stroke-width="0.95"/><path d="M62.70 150.50C62.90 147.60 64.70 146.20 67 146.20C69.30 146.20 71.10 147.60 71.30 150.50Z" stroke="#d6adff" stroke-width="0.95"/>
<circle cx="67" cy="166.00" r="2.7" stroke="#d6adff" stroke-width="0.95"/><path d="M62.70 174.50C62.90 171.60 64.70 170.20 67 170.20C69.30 170.20 71.10 171.60 71.30 174.50Z" stroke="#d6adff" stroke-width="0.95"/>
<path d="M58.10 194.95L62.00 198.85L65.90 194.95" stroke="#85858f" stroke-width="0.85"/>
<circle cx="67" cy="217.00" r="2.7" stroke="#d6adff" stroke-width="0.95"/><path d="M62.70 225.50C62.90 222.60 64.70 221.20 67 221.20C69.30 221.20 71.10 222.60 71.30 225.50Z" stroke="#d6adff" stroke-width="0.95"/>
<circle cx="67" cy="241.00" r="2.7" stroke="#d6adff" stroke-width="0.95"/><path d="M62.70 249.50C62.90 246.60 64.70 245.20 67 245.20C69.30 245.20 71.10 246.60 71.30 249.50Z" stroke="#d6adff" stroke-width="0.95"/>
<path d="M60.50 267.40L64.50 271.50L60.50 275.60" stroke="#85858f" stroke-width="0.85"/>
<path d="M60.50 294.40L64.50 298.50L60.50 302.60" stroke="#85858f" stroke-width="0.85"/>
<path d="M60.50 321.40L64.50 325.50L60.50 329.60" stroke="#85858f" stroke-width="0.85"/>
<path d="M60.50 348.40L64.50 352.50L60.50 356.60" stroke="#85858f" stroke-width="0.85"/>
<circle cx="67" cy="374.00" r="2.7" stroke="#d6adff" stroke-width="0.95"/><path d="M62.70 382.50C62.90 379.60 64.70 378.20 67 378.20C69.30 378.20 71.10 379.60 71.30 382.50Z" stroke="#d6adff" stroke-width="0.95"/>
<circle cx="67" cy="401.00" r="2.7" stroke="#d6adff" stroke-width="0.95"/><path d="M62.70 409.50C62.90 406.60 64.70 405.20 67 405.20C69.30 405.20 71.10 406.60 71.30 409.50Z" stroke="#d6adff" stroke-width="0.95"/>
<circle cx="67" cy="428.00" r="2.7" stroke="#d6adff" stroke-width="0.95"/><path d="M62.70 436.50C62.90 433.60 64.70 432.20 67 432.20C69.30 432.20 71.10 433.60 71.30 436.50Z" stroke="#d6adff" stroke-width="0.95"/>
<circle cx="67" cy="455.00" r="2.7" stroke="#d6adff" stroke-width="0.95"/><path d="M62.70 463.50C62.90 460.60 64.70 459.20 67 459.20C69.30 459.20 71.10 460.60 71.30 463.50Z" stroke="#d6adff" stroke-width="0.95"/>
<circle cx="67" cy="482.00" r="2.7" stroke="#d6adff" stroke-width="0.95"/><path d="M62.70 490.50C62.90 487.60 64.70 486.20 67 486.20C69.30 486.20 71.10 487.60 71.30 490.50Z" stroke="#d6adff" stroke-width="0.95"/>
<path d="M61.90 520.10L66.00 524.30L70.10 520.10" stroke="#6b6b76" stroke-width="0.9"/>
<path d="M67 561.70C64.40 559.30 62.20 557.60 62.20 555.00A4.8 4.8 0 0 1 71.80 555.00C71.80 557.60 69.60 559.30 67 561.70Z" stroke="#5fe0a6" stroke-width="1.0"/>
<path d="M67 585.70C64.40 583.30 62.20 581.60 62.20 579.00A4.8 4.8 0 0 1 71.80 579.00C71.80 581.60 69.60 583.30 67 585.70Z" stroke="#5fe0a6" stroke-width="1.0"/>
<path d="M61.90 613.10L66.00 617.30L70.10 613.10" stroke="#6b6b76" stroke-width="0.9"/>
<path d="M67 645.3L71.8 648.15V653.85L67 656.7L62.2 653.85V648.15Z M62.2 648.15L67 651.0L71.8 648.15 M67 651.0V656.7" stroke="#fbab5c" stroke-width="1.0"/>
<path d="M67 672.3L71.8 675.15V680.85L67 683.7L62.2 680.85V675.15Z M62.2 675.15L67 678.0L71.8 675.15 M67 678.0V683.7" stroke="#fbab5c" stroke-width="1.0"/>
<path d="M67 699.3L71.8 702.15V707.85L67 710.7L62.2 707.85V702.15Z M62.2 702.15L67 705.0L71.8 702.15 M67 705.0V710.7" stroke="#fbab5c" stroke-width="1.0"/>
<path d="M61.90 739.10L66.00 743.30L70.10 739.10" stroke="#6b6b76" stroke-width="0.9"/>
<path d="M1084.5 568.5L1079.5 573.5 M1084.5 572L1083 573.5" stroke="#9a9aa3" stroke-width="0.9"/>
<path d="M1084.5 696.5L1079.5 701.5 M1084.5 700L1083 701.5" stroke="#9a9aa3" stroke-width="0.9"/></svg>
</div>
</body>
</html>
